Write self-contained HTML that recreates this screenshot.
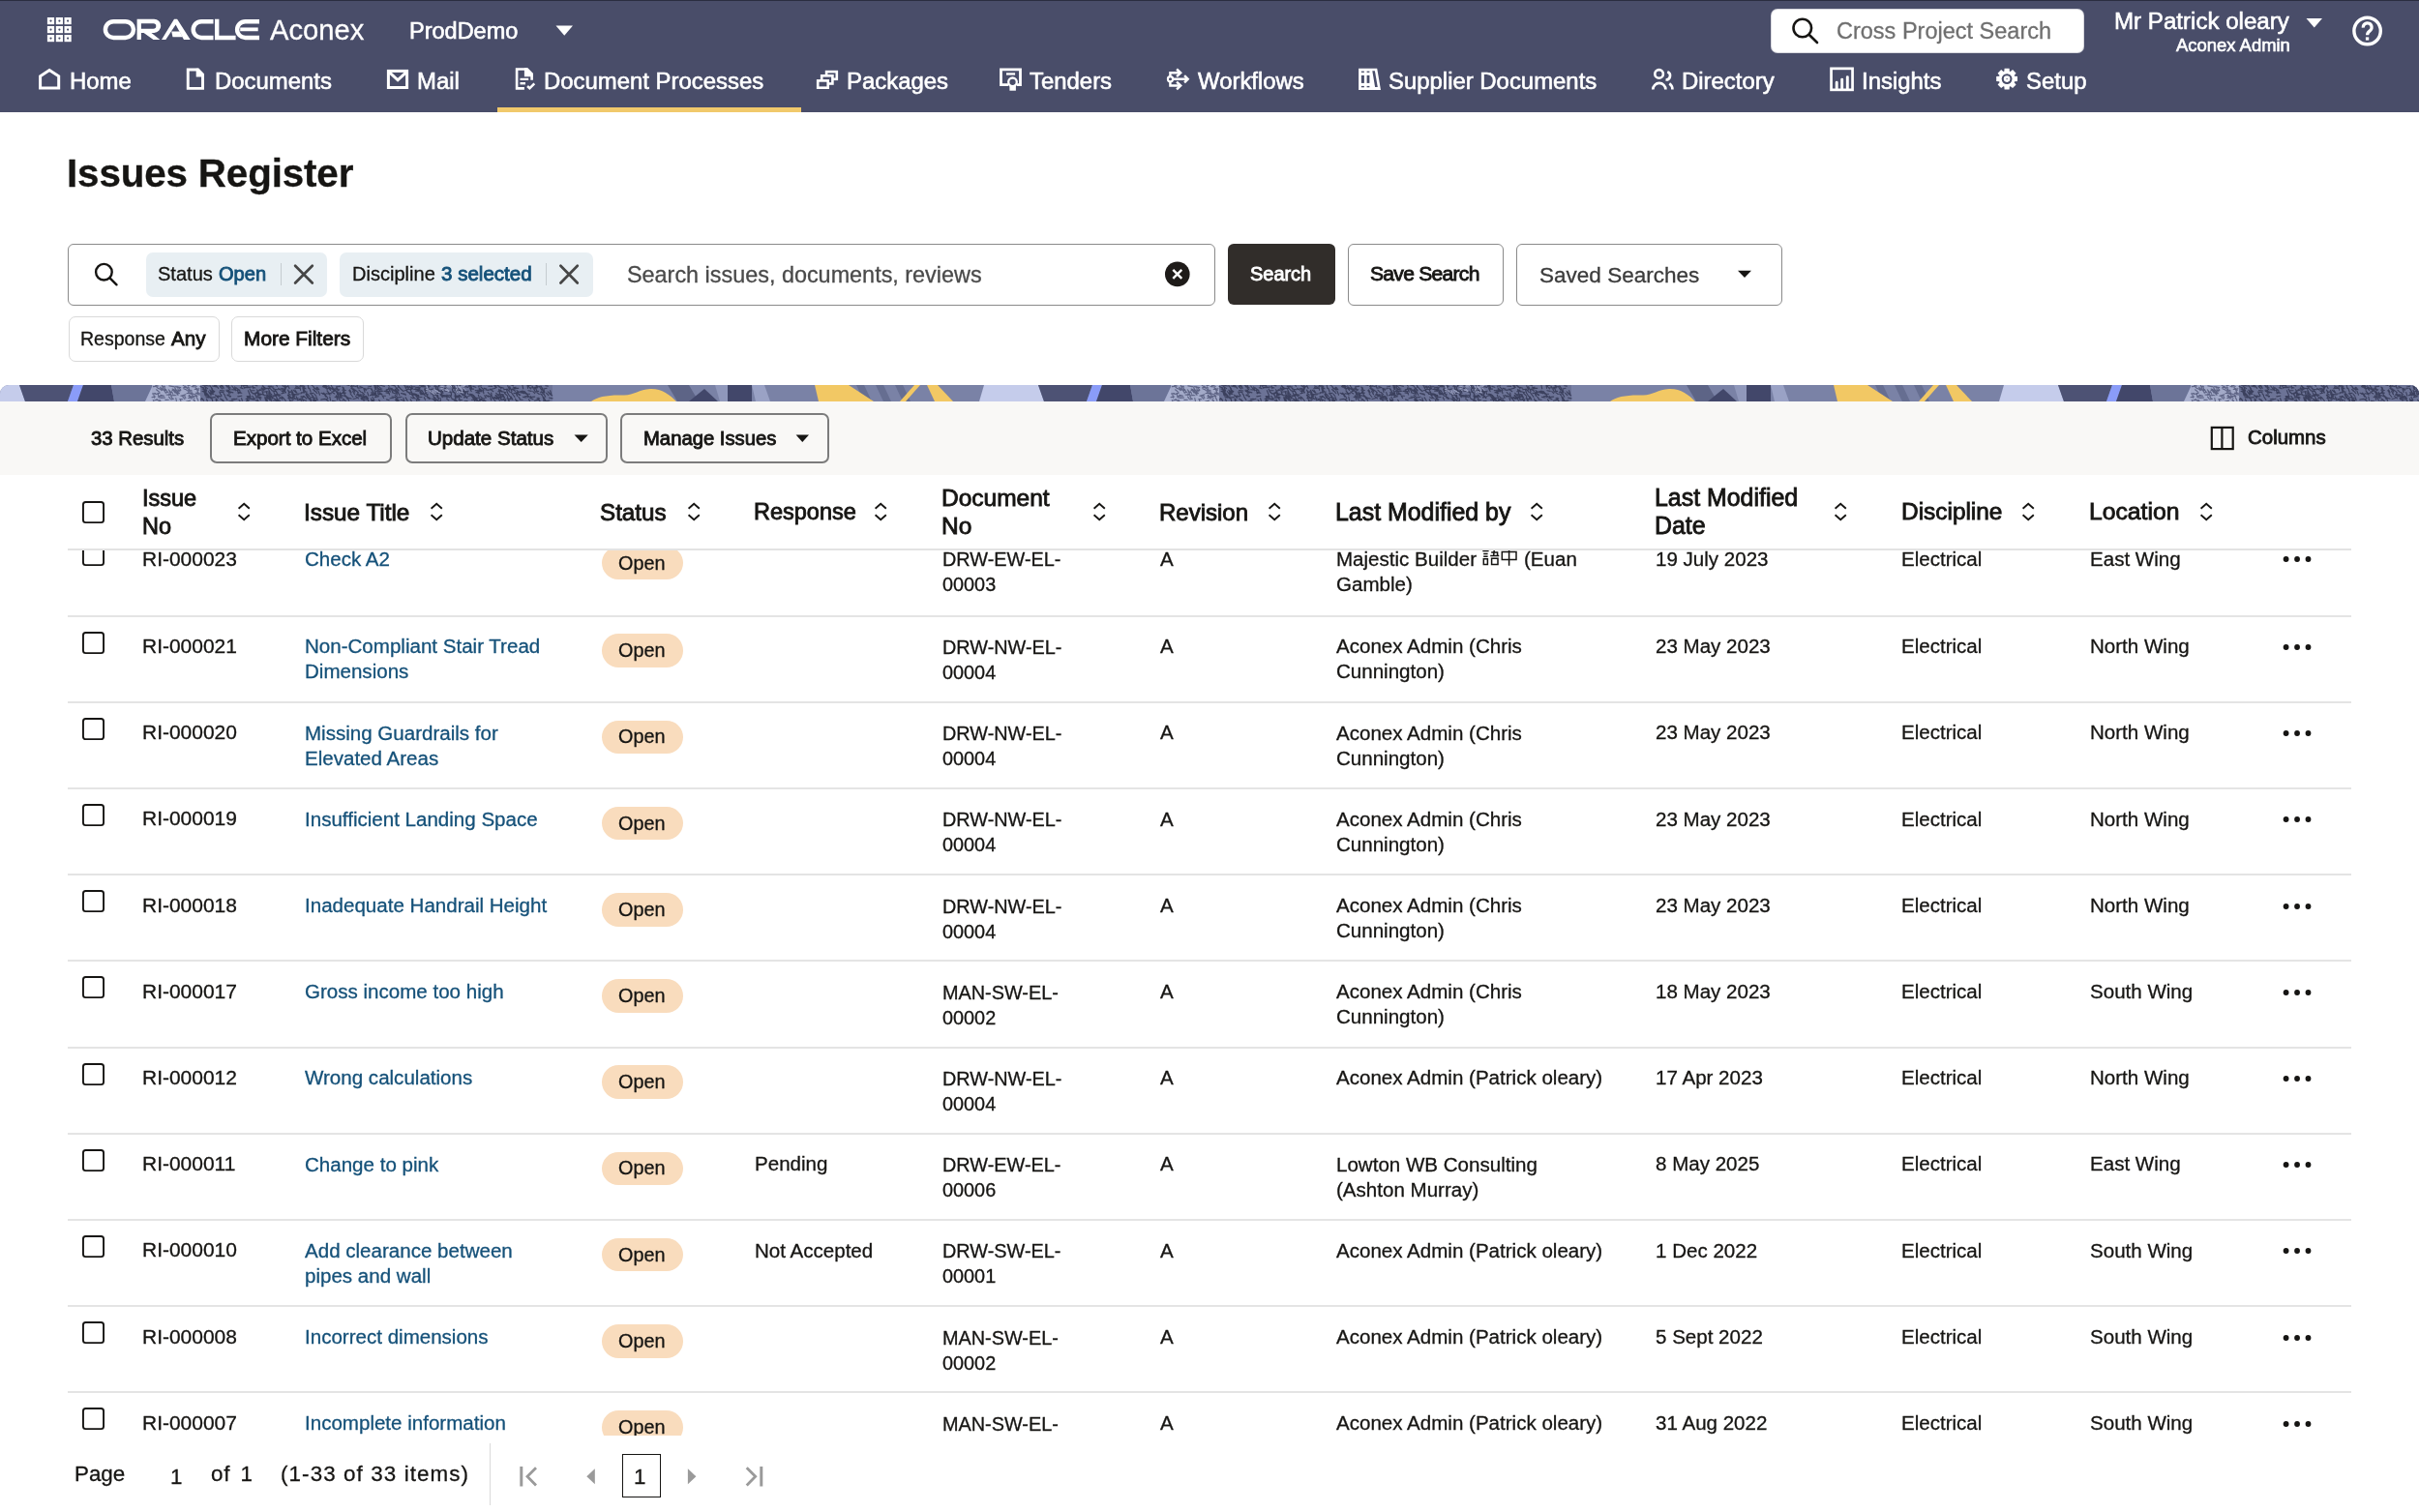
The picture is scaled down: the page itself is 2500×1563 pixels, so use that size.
<!DOCTYPE html><html><head><meta charset="utf-8"><style>
html,body{margin:0;padding:0;width:2500px;height:1563px;overflow:hidden;background:#fff;font-family:"Liberation Sans", sans-serif;}
.t{position:absolute;white-space:nowrap;font-family:"Liberation Sans", sans-serif;will-change:transform;-webkit-text-stroke:0.3px currentColor;}
.sb{-webkit-text-stroke:0.85px currentColor;}
.hb{-webkit-text-stroke:1.3px currentColor;}
.wh{-webkit-text-stroke:0.6px currentColor;}
</style></head><body>
<div style="position:absolute;left:0.00px;top:0.00px;width:2500.00px;height:116.00px;background:#494d69"></div>
<div style="position:absolute;left:0.00px;top:0.00px;width:2500.00px;height:1.20px;background:#2a2d40"></div>
<svg style="position:absolute;left:0px;top:0px;" width="100" height="60" viewBox="0 0 100 60"><rect x="48.9" y="18" width="7.2" height="7.2" fill="#fff"/><circle cx="52.5" cy="21.6" r="1.1" fill="#494d69"/><rect x="57.8" y="18" width="7.2" height="7.2" fill="#fff"/><circle cx="61.4" cy="21.6" r="1.1" fill="#494d69"/><rect x="66.5" y="18" width="7.2" height="7.2" fill="#fff"/><circle cx="70.1" cy="21.6" r="1.1" fill="#494d69"/><rect x="48.9" y="27" width="7.2" height="7.2" fill="#fff"/><circle cx="52.5" cy="30.6" r="1.1" fill="#494d69"/><rect x="57.8" y="27" width="7.2" height="7.2" fill="#fff"/><circle cx="61.4" cy="30.6" r="1.1" fill="#494d69"/><rect x="66.5" y="27" width="7.2" height="7.2" fill="#fff"/><circle cx="70.1" cy="30.6" r="1.1" fill="#494d69"/><rect x="48.9" y="36" width="7.2" height="7.2" fill="#fff"/><circle cx="52.5" cy="39.6" r="1.1" fill="#494d69"/><rect x="57.8" y="36" width="7.2" height="7.2" fill="#fff"/><circle cx="61.4" cy="39.6" r="1.1" fill="#494d69"/><rect x="66.5" y="36" width="7.2" height="7.2" fill="#fff"/><circle cx="70.1" cy="39.6" r="1.1" fill="#494d69"/></svg>
<svg style="position:absolute;left:0px;top:0px;" width="280" height="60" viewBox="0 0 280 60"><g fill="none" stroke="#fff" stroke-width="4.4">
<rect x="108.9" y="22.2" width="29.1" height="16.8" rx="8.4"/>
<path d="M220.5 22.2 H208.1 A8.4 8.4 0 0 0 208.1 39 H220.5"/>
<path d="M224.2 19.8 V39 H243.6"/>
<path d="M268 22.2 H253.5 A8.4 8.4 0 0 0 253.5 39 H268"/>
</g>
<path d="M248.2 30.35 H266.7" stroke="#fff" stroke-width="3.8"/>
<path fill="#fff" fill-rule="evenodd" d="M141.6 19.8 H159.2 A7.05 7.05 0 0 1 159.2 33.9 H156.5 L165.3 41 H158.5 L148.6 33.9 H145.9 V41 H141.6 Z M145.9 24.2 H158.5 A2.8 2.8 0 0 1 158.5 29.8 H145.9 Z"/>
<path fill="#fff" fill-rule="evenodd" d="M167 41 L180 19.8 H183.1 L196.7 41 H190 L181.6 25.5 L171.3 41 Z"/>
<path fill="#fff" d="M177.2 32.4 H185.7 L188.65 38.3 H178.5 Z"/>
</svg>
<div class="t" style="left:279.00px;top:16.60px;font-size:29.17px;line-height:28.8px;font-weight:400;color:#fff;">Aconex</div>
<div class="t wh" style="left:422.80px;top:21.30px;font-size:23.5px;line-height:23.2px;font-weight:400;color:#fff;">ProdDemo</div>
<svg style="position:absolute;left:570px;top:20px;" width="30" height="24" viewBox="0 0 30 24"><path d="M4.5 6.4 H22 L13.25 16.8 Z" fill="#fff"/></svg>
<div style="position:absolute;left:1831.00px;top:10.00px;width:322.00px;height:44.00px;background:#fff;border-radius:6px;box-shadow:0 0 0 1px #d8d8de"></div>
<svg style="position:absolute;left:1840px;top:10px;" width="50" height="44" viewBox="0 0 50 44"><circle cx="22.8" cy="19" r="9.3" fill="none" stroke="#161513" stroke-width="2.6"/><path d="M29.6 25.8 L38 34" stroke="#161513" stroke-width="2.6" stroke-linecap="round"/></svg>
<div class="t" style="left:1897.80px;top:20.90px;font-size:23.5px;line-height:23.2px;font-weight:400;color:#6f6f6f;">Cross Project Search</div>
<div class="t wh" style="right:134.00px;top:9.60px;font-size:24.11px;line-height:23.8px;font-weight:400;color:#fff;">Mr Patrick oleary</div>
<div class="t wh" style="right:133.50px;top:37.80px;font-size:18.44px;line-height:18.2px;font-weight:400;color:#fff;">Aconex Admin</div>
<svg style="position:absolute;left:2380px;top:15px;" width="24" height="18" viewBox="0 0 24 18"><path d="M3.5 4.1 H20 L11.75 13.6 Z" fill="#fff"/></svg>
<svg style="position:absolute;left:2424px;top:12px;" width="46" height="42" viewBox="0 0 46 42"><circle cx="22.6" cy="20" r="13.7" fill="none" stroke="#fff" stroke-width="3.4"/><path d="M18.3 16.6 A4.4 4.4 0 1 1 25.2 19.9 C23.3 21.2 22.6 22 22.6 24.2" fill="none" stroke="#fff" stroke-width="3.2"/><rect x="20.9" y="26.4" width="3.3" height="3.2" fill="#fff"/></svg>
<div class="t wh" style="left:71.60px;top:71.80px;font-size:23.91px;line-height:23.6px;font-weight:400;color:#fff;">Home</div>
<div class="t wh" style="left:222.20px;top:71.80px;font-size:23.91px;line-height:23.6px;font-weight:400;color:#fff;">Documents</div>
<div class="t wh" style="left:430.60px;top:71.80px;font-size:23.91px;line-height:23.6px;font-weight:400;color:#fff;">Mail</div>
<div class="t wh" style="left:561.80px;top:71.80px;font-size:23.91px;line-height:23.6px;font-weight:400;color:#fff;">Document Processes</div>
<div class="t wh" style="left:874.80px;top:71.80px;font-size:23.91px;line-height:23.6px;font-weight:400;color:#fff;">Packages</div>
<div class="t wh" style="left:1064.30px;top:71.80px;font-size:23.91px;line-height:23.6px;font-weight:400;color:#fff;">Tenders</div>
<div class="t wh" style="left:1237.50px;top:71.80px;font-size:23.91px;line-height:23.6px;font-weight:400;color:#fff;">Workflows</div>
<div class="t wh" style="left:1435.40px;top:71.80px;font-size:23.91px;line-height:23.6px;font-weight:400;color:#fff;">Supplier Documents</div>
<div class="t wh" style="left:1738.00px;top:71.80px;font-size:23.91px;line-height:23.6px;font-weight:400;color:#fff;">Directory</div>
<div class="t wh" style="left:1924.40px;top:71.80px;font-size:23.91px;line-height:23.6px;font-weight:400;color:#fff;">Insights</div>
<div class="t wh" style="left:2094.10px;top:71.80px;font-size:23.91px;line-height:23.6px;font-weight:400;color:#fff;">Setup</div>
<svg style="position:absolute;left:34px;top:66px;" width="40" height="32" viewBox="0 0 40 32"><path d="M7.6 25.1 V12.7 L17.1 6.5 L26.7 12.7 V25.1 Z" fill="none" stroke="#fff" stroke-width="3" stroke-linejoin="miter"/></svg>
<svg style="position:absolute;left:186px;top:66px;" width="40" height="32" viewBox="0 0 40 32"><path d="M8.25 25.4 V6.05 H18.6 L23.5 11 V25.4 Z" fill="none" stroke="#fff" stroke-width="2.9"/><path d="M16.7 4.7 H19.3 L25 10.4 V13.5 H16.7 Z" fill="#fff"/></svg>
<svg style="position:absolute;left:394px;top:66px;" width="40" height="32" viewBox="0 0 40 32"><rect x="7.4" y="7.4" width="19.2" height="17.1" fill="none" stroke="#fff" stroke-width="3"/><path d="M8.3 8.6 L17.1 16.8 L25.9 8.6" fill="none" stroke="#fff" stroke-width="3"/></svg>
<svg style="position:absolute;left:525px;top:66px;" width="40" height="32" viewBox="0 0 40 32"><path d="M16.9 25.4 H9.1 V5.5 H19.6 L24.6 10.6 V16.7" fill="none" stroke="#fff" stroke-width="2.6"/><path d="M16.9 4.2 H20.2 L25.9 10 V13.2 H16.9 Z" fill="#fff"/><rect x="12.5" y="14.8" width="8.7" height="2.2" fill="#fff"/><rect x="12.5" y="19" width="5.5" height="2.4" fill="#fff"/><path d="M20.1 23 L22.4 25.3 L27.3 20.3" fill="none" stroke="#fff" stroke-width="2.5"/></svg>
<svg style="position:absolute;left:838px;top:66px;" width="40" height="32" viewBox="0 0 40 32"><rect x="16.1" y="8.1" width="10.7" height="7.7" fill="#494d69" stroke="#fff" stroke-width="2.6"/><rect x="11.2" y="12.3" width="11.2" height="8.2" fill="#494d69" stroke="#fff" stroke-width="2.6"/><rect x="7.2" y="17.4" width="10.5" height="7.3" fill="#494d69" stroke="#fff" stroke-width="2.6"/></svg>
<svg style="position:absolute;left:1026px;top:66px;" width="40" height="32" viewBox="0 0 40 32"><path d="M16 21.6 H8.5 V5.8 H28.5 V21.6 H25" fill="none" stroke="#fff" stroke-width="2.8"/><rect x="14" y="9.3" width="9.1" height="2.3" fill="#fff"/><rect x="17.4" y="22" width="6.5" height="5.7" fill="#fff"/><circle cx="20.5" cy="18.8" r="4.3" fill="#494d69" stroke="#fff" stroke-width="2.3"/></svg>
<svg style="position:absolute;left:1200px;top:66px;" width="40" height="32" viewBox="0 0 40 32"><circle cx="9.5" cy="15.7" r="2.6" fill="none" stroke="#fff" stroke-width="2.1"/><path d="M9.4 13 V9.2 H20 M9.4 18.4 V22.5 H20 M12.2 15.7 H27" fill="none" stroke="#fff" stroke-width="2.4"/><path d="M16.1 5.5 L20.2 9.3 L16.1 13.1 M24.1 12.1 L27.7 15.7 L24.1 19.3 M16.1 18.7 L20.2 22.5 L16.1 26.3" fill="none" stroke="#fff" stroke-width="2.4"/></svg>
<svg style="position:absolute;left:1398px;top:66px;" width="40" height="32" viewBox="0 0 40 32"><path d="M6.1 4.7 H25.2 L29 27.1 H6.1 Z" fill="#fff"/><g fill="#494d69"><rect x="8.9" y="7.6" width="3" height="1.3"/><rect x="8.9" y="11.9" width="3" height="8"/><rect x="8.9" y="22.9" width="3" height="1.4"/><rect x="14.6" y="7.6" width="2.8" height="1.3"/><rect x="14.6" y="11.9" width="2.8" height="8"/><rect x="14.6" y="22.9" width="2.8" height="1.4"/><path d="M20.3 7.2 H22.9 L25.8 24.1 H23.1 Z"/></g></svg>
<svg style="position:absolute;left:1700px;top:66px;" width="40" height="32" viewBox="0 0 40 32"><circle cx="14.6" cy="10.4" r="4.3" fill="none" stroke="#fff" stroke-width="2.6"/><path d="M8.3 26.5 A6.55 6.55 0 0 1 21.4 26.5" fill="none" stroke="#fff" stroke-width="2.7"/><path d="M23.3 8.2 A4.3 4.3 0 0 1 21.5 16.5" fill="none" stroke="#fff" stroke-width="2.6"/><path d="M25.3 20.3 A7 7 0 0 1 28.4 26.5" fill="none" stroke="#fff" stroke-width="2.7"/></svg>
<svg style="position:absolute;left:1884px;top:66px;" width="40" height="32" viewBox="0 0 40 32"><rect x="8.55" y="4.85" width="22" height="22" fill="none" stroke="#fff" stroke-width="2.7"/><path d="M14.2 25.6 V19.3 M19.7 25.6 V16.1 M25.3 25.6 V13.6" fill="none" stroke="#fff" stroke-width="2.9" stroke-linecap="round"/></svg>
<svg style="position:absolute;left:2056px;top:66px;" width="40" height="32" viewBox="0 0 40 32"><g transform="translate(18.1 15.6)"><polygon points="-2.73,-7.94 -2.52,-10.91 2.52,-10.91 2.73,-7.94 3.68,-7.55 5.94,-9.5 9.5,-5.94 7.55,-3.68 7.94,-2.73 10.91,-2.52 10.91,2.52 7.94,2.73 7.55,3.68 9.5,5.94 5.94,9.5 3.68,7.55 2.73,7.94 2.52,10.91 -2.52,10.91 -2.73,7.94 -3.68,7.55 -5.94,9.5 -9.5,5.94 -7.55,3.68 -7.94,2.73 -10.91,2.52 -10.91,-2.52 -7.94,-2.73 -7.55,-3.68 -9.5,-5.94 -5.94,-9.5 -3.68,-7.55" fill="#fff"/><circle r="5.4" fill="#494d69"/><circle r="3.3" fill="#fff"/><circle r="0.7" fill="#494d69"/></g></svg>
<div style="position:absolute;left:514.00px;top:110.50px;width:314.00px;height:5.60px;background:#f1c96b"></div>
<div class="t" style="left:69.30px;top:159.50px;font-size:40.32px;line-height:39.8px;font-weight:700;color:#161513;letter-spacing:-0.12px">Issues Register</div>
<div style="position:absolute;left:70.00px;top:251.60px;width:1186.00px;height:64.20px;box-sizing:border-box;border:1.7px solid #8a8a8a;border-radius:6px;background:#fff"></div>
<svg style="position:absolute;left:90px;top:262px;" width="40" height="40" viewBox="0 0 40 40"><circle cx="17.4" cy="19.2" r="8.3" fill="none" stroke="#161513" stroke-width="2.4"/><path d="M23.5 25.3 L30.5 32.3" stroke="#161513" stroke-width="2.4" stroke-linecap="round"/></svg>
<div style="position:absolute;left:151.20px;top:260.50px;width:187.20px;height:46.50px;background:#e8eff3;border-radius:7px"></div>
<div style="position:absolute;left:351.20px;top:260.50px;width:261.60px;height:46.50px;background:#e8eff3;border-radius:7px"></div>
<div class="t" style="left:163.00px;top:273.90px;font-size:20.06px;line-height:19.8px;font-weight:400;color:#161513;">Status</div>
<div class="t sb" style="left:226.20px;top:273.90px;font-size:20.06px;line-height:19.8px;font-weight:400;color:#155179;">Open</div>
<div style="position:absolute;left:289.50px;top:272.00px;width:1.00px;height:23.00px;background:#c5ccd0"></div>
<svg style="position:absolute;left:298px;top:268px;" width="32" height="32" viewBox="0 0 32 32"><path d="M7.1 6.7 L24.8 24.5 M24.8 6.7 L7.1 24.5" stroke="#464646" stroke-width="2.7" stroke-linecap="round"/></svg>
<div class="t" style="left:363.60px;top:273.90px;font-size:20.06px;line-height:19.8px;font-weight:400;color:#161513;">Discipline</div>
<div class="t sb" style="left:456.00px;top:273.15px;font-size:20.56px;line-height:20.3px;font-weight:400;color:#155179;">3 selected</div>
<div style="position:absolute;left:564.00px;top:272.00px;width:1.00px;height:23.00px;background:#c5ccd0"></div>
<svg style="position:absolute;left:572px;top:268px;" width="32" height="32" viewBox="0 0 32 32"><path d="M7.4 6.7 L24.8 24.5 M24.8 6.7 L7.4 24.5" stroke="#464646" stroke-width="2.7" stroke-linecap="round"/></svg>
<div class="t" style="left:647.80px;top:273.05px;font-size:23.4px;line-height:23.1px;font-weight:400;color:#4a4a4a;">Search issues, documents, reviews</div>
<svg style="position:absolute;left:1200px;top:267px;" width="34" height="34" viewBox="0 0 34 34"><circle cx="16.8" cy="16.4" r="12.8" fill="#1e1b19"/><path d="M12.3 11.9 L21.3 20.9 M21.3 11.9 L12.3 20.9" stroke="#fff" stroke-width="2.4"/></svg>
<div style="position:absolute;left:1269.00px;top:251.80px;width:111.00px;height:63.40px;background:#312d2a;border-radius:6px"></div>
<div class="t sb" style="left:1292.00px;top:274.35px;font-size:19.96px;line-height:19.7px;font-weight:400;color:#fff;">Search</div>
<div style="position:absolute;left:1393.20px;top:251.60px;width:161.20px;height:64.00px;box-sizing:border-box;border:1.7px solid #8a8a8a;border-radius:6px"></div>
<div class="t sb" style="left:1416.30px;top:273.30px;font-size:21.07px;line-height:20.8px;font-weight:400;color:#161513;letter-spacing:-0.72px">Save Search</div>
<div style="position:absolute;left:1567.20px;top:251.60px;width:275.10px;height:64.00px;box-sizing:border-box;border:1.7px solid #8a8a8a;border-radius:6px"></div>
<div class="t" style="left:1590.50px;top:273.57px;font-size:22.54px;line-height:22.25px;font-weight:400;color:#3b3b3b;">Saved Searches</div>
<svg style="position:absolute;left:1790px;top:275px;" width="24" height="16" viewBox="0 0 24 16"><path d="M6 4.7 H20 L13 12 Z" fill="#161513"/></svg>
<div style="position:absolute;left:70.60px;top:327.40px;width:156.00px;height:46.60px;box-sizing:border-box;border:1.8px solid #d9d9d9;border-radius:7px"></div>
<div class="t" style="left:83.10px;top:341.25px;font-size:19.55px;line-height:19.3px;font-weight:400;color:#161513;">Response</div>
<div class="t sb" style="left:176.80px;top:340.25px;font-size:20.56px;line-height:20.3px;font-weight:400;color:#161513;">Any</div>
<div style="position:absolute;left:239.10px;top:327.40px;width:137.00px;height:46.60px;box-sizing:border-box;border:1.8px solid #d9d9d9;border-radius:7px"></div>
<div class="t sb" style="left:251.80px;top:340.10px;font-size:20.87px;line-height:20.6px;font-weight:400;color:#161513;">More Filters</div>
<div style="position:absolute;left:0;top:398px;width:2500px;height:17px;overflow:hidden;border-radius:9px 9px 0 0"><svg width="2500" height="17" viewBox="0 0 2500 17" style="display:block"><defs></defs><g><rect x="-40" y="0" width="1100" height="17" fill="#7a82a6"/><polygon points="-36,0 20,0 26,17 -41,17" fill="#c5cceb"/><polygon points="20,0 76,0 70,17 26,17" fill="#4d5274"/><polygon points="76,0 86,0 80,17 70,17" fill="#8a9cf8"/><polygon points="86,0 115,0 118,17 80,17" fill="#42476a"/><polygon points="115,0 158,0 150,17 118,17" fill="#6c7498"/><polygon points="158,0 160,0 157,17 150,17" fill="#aab1d0"/><rect x="157" y="0" width="50" height="17" fill="#a3aac8"/><path d="M194.5 7.1L196.9 9.2M179.8 1.5L181.5 4.1M171.0 8.0L174.0 7.2M169.7 5.6L171.4 8.3M180.9 3.3L183.1 6.3M202.8 8.6L206.6 8.8M163.2 8.3L163.9 11.9M164.9 15.4L166.5 17.5M176.8 11.6L178.2 14.0M202.7 3.1L205.2 5.3M158.9 10.1L159.6 13.1M201.9 2.3L204.1 5.0M203.7 5.2L205.2 8.8M181.6 7.7L184.0 10.3M181.6 1.6L185.5 2.4M184.2 5.8L186.9 5.1M165.8 10.4L169.6 11.3M204.3 9.7L207.6 10.2M200.7 0.4L203.3 1.4M197.7 5.6L198.5 9.4M181.8 13.5L182.6 17.8M183.1 2.4L186.7 2.6M168.1 4.6L171.7 5.4M168.2 1.6L169.2 5.0M167.2 1.2L170.4 1.6M194.8 1.8L195.7 6.2M191.7 1.0L193.5 3.7M179.1 5.4L181.1 8.1M200.1 11.4L203.9 11.5M174.8 0.9L178.9 1.6M160.9 1.1L163.3 3.4M175.2 6.6L176.5 9.2M195.6 10.7L198.1 12.8M158.4 15.8L159.4 18.1M189.8 2.6L192.3 2.0M199.2 8.9L203.1 10.3M160.7 0.3L163.4 1.0M166.2 2.9L169.4 5.3M197.9 7.9L199.0 11.5M167.4 -0.0L168.2 2.5M196.5 7.9L198.9 10.3M185.3 3.3L186.7 5.5M176.8 11.1L180.2 10.2M194.9 11.4L198.0 14.2M166.2 13.1L170.4 13.1M177.5 6.8L178.6 9.3M201.3 4.4L205.7 4.0M191.9 2.8L195.4 2.8M200.5 14.9L202.4 18.3M194.6 4.8L198.0 5.5M197.9 1.7L202.0 0.6M161.1 9.6L165.2 8.3M163.8 12.6L167.4 13.4M178.1 4.0L181.5 5.4M188.2 11.4L190.9 14.5M171.4 4.5L173.0 7.5M198.9 -1.8L200.0 2.3M179.6 1.8L184.0 2.0M187.7 -1.2L191.0 1.7M159.8 15.8L162.4 15.2M186.9 11.1L191.2 11.0M183.4 1.7L184.2 5.0M157.4 9.0L160.6 8.6M185.8 14.6L188.7 14.8M174.1 9.1L176.8 10.0M158.4 1.6L162.6 1.2M202.3 8.3L205.1 7.9M193.1 5.6L196.4 6.5M193.0 8.5L195.5 8.6M189.8 3.7L192.8 4.9M176.9 14.9L179.5 14.2M162.0 14.7L165.1 17.1M178.0 5.4L182.0 6.2M181.6 6.9L184.3 9.0M198.7 11.5L201.0 13.4M174.3 4.8L176.8 7.5M202.5 11.0L204.1 14.4M195.7 10.6L198.6 12.8M164.0 11.5L168.2 11.2M181.9 5.4L186.0 6.8M183.1 6.6L185.4 8.7M203.6 13.1L204.9 16.2M156.9 12.7L160.6 12.0M174.5 12.1L176.1 14.1M199.9 15.4L202.6 18.2M163.8 3.6L167.8 5.2M202.9 4.4L206.0 3.8M161.6 4.8L164.8 7.4M170.9 15.4L174.3 15.2M190.2 11.0L191.9 13.4M165.7 2.2L166.8 5.7M193.8 0.7L196.3 0.2M187.6 11.0L192.0 9.8M178.9 10.5L182.0 10.8M194.7 13.5L199.0 13.3M169.8 1.0L170.7 5.1M171.9 10.0L175.3 10.5M186.4 14.8L187.2 18.0M192.2 17.3L196.5 16.1" stroke="#5d6384" stroke-width="1.1" stroke-linecap="round"/><rect x="207" y="0" width="364" height="17" fill="#6c7396"/><path d="M430.7 2.4L433.9 3.6M544.5 9.2L547.5 9.3M282.5 11.4L285.2 11.4M448.9 8.2L452.3 8.5M221.4 0.3L224.2 1.3M512.7 10.3L513.3 13.3M553.8 -0.8L555.6 1.7M439.3 6.2L440.9 9.4M452.3 10.4L453.5 14.6M512.1 10.5L514.0 14.2M311.7 11.9L314.4 12.3M290.9 3.5L295.1 4.6M223.0 0.0L225.7 3.3M561.9 12.6L563.8 16.4M384.9 12.6L386.6 15.0M332.0 8.3L335.9 9.4M428.6 9.6L432.8 10.6M445.1 4.6L447.7 4.0M537.0 15.0L540.0 15.3M475.6 7.0L478.7 6.7M369.0 -0.1L369.9 3.1M211.1 1.1L214.6 3.6M279.3 3.7L281.3 5.8M486.4 4.1L489.6 4.1M432.3 12.5L436.0 12.5M424.2 5.0L425.8 8.0M526.0 2.6L529.1 5.0M348.7 9.3L352.7 9.2M469.3 15.9L472.7 16.8M322.9 12.5L325.4 14.8M305.1 5.5L307.0 8.4M338.7 3.4L342.2 3.9M409.4 5.2L411.5 7.6M458.8 6.1L462.0 6.2M216.8 8.3L220.1 9.4M211.2 7.7L212.0 10.7M257.9 9.2L259.1 12.9M492.6 16.2L496.5 16.7M346.1 12.4L349.2 12.7M218.6 3.2L220.4 6.4M271.0 6.2L272.3 10.2M305.6 2.5L308.5 3.5M213.6 14.7L215.0 18.6M357.3 11.1L359.9 13.7M423.2 1.5L425.4 4.0M532.5 14.0L533.6 16.6M452.6 4.4L455.6 7.6M390.8 9.8L394.9 9.4M301.3 5.3L303.0 8.3M348.8 7.1L350.7 9.4M457.7 10.6L460.8 10.8M404.5 4.2L407.1 5.0M271.1 1.1L274.1 3.1M418.0 5.8L420.6 5.3M272.4 1.4L274.1 4.1M429.2 10.5L432.0 14.0M561.5 16.2L565.6 16.6M235.1 10.0L238.0 12.3M367.4 11.4L370.5 13.9M335.3 -1.3L337.9 1.9M299.5 16.3L302.6 15.9M329.2 6.7L330.5 10.2M347.4 1.7L351.7 1.4M351.2 7.4L352.6 11.3M476.1 6.2L479.0 6.5M323.7 4.5L325.5 6.5M286.2 9.3L289.8 10.4M249.9 0.2L253.3 0.0M433.5 0.2L437.8 0.4M536.8 7.1L540.2 6.1M230.9 8.6L232.5 10.7M252.6 2.5L256.5 2.4M341.6 -1.1L343.6 2.9M324.4 15.2L327.4 15.2M334.9 8.3L335.9 10.7M275.2 7.0L276.1 9.9M339.7 0.9L340.8 4.3M384.2 4.2L385.3 7.1M544.7 9.2L545.9 12.3M411.7 1.2L413.7 3.7M354.4 10.8L358.3 12.4M354.0 7.8L356.7 8.5M556.1 13.2L557.7 16.9M427.8 4.4L430.8 4.4M219.2 5.3L220.8 7.5M488.9 1.4L491.8 2.3M383.9 7.6L385.3 10.9M484.5 1.2L487.2 3.2M507.9 4.3L512.2 3.2M399.3 4.9L402.2 4.3M285.9 7.3L287.5 11.1M494.4 1.3L497.6 0.8M433.6 8.0L437.1 8.7M226.7 7.1L230.9 7.4M294.5 -1.0L295.4 3.4M390.7 4.5L394.9 4.0M494.9 2.9L498.0 5.6M461.9 10.7L466.4 10.9M384.9 15.7L388.1 18.2M537.5 7.1L541.1 6.8M334.3 14.7L338.7 14.3M480.0 16.9L483.1 16.5M234.8 10.6L238.5 11.5M514.5 12.6L516.4 16.1M503.8 5.0L506.5 4.9M320.3 8.9L324.0 8.4M344.7 4.2L348.7 3.2M266.0 14.8L267.2 18.2M407.0 6.2L411.0 5.7M461.9 10.1L463.5 12.0M429.8 3.7L432.5 6.3M228.6 0.1L231.2 3.3M368.7 10.2L373.2 9.9M527.5 3.4L528.9 6.6M354.7 6.8L356.6 10.5M383.4 14.1L385.3 17.9M282.0 16.0L285.4 15.8M268.1 4.9L272.1 5.0M488.8 12.1L492.4 14.7M416.8 13.4L417.7 16.1M484.8 9.8L487.7 10.6M234.3 6.3L237.0 6.3M271.6 0.7L273.0 3.4M292.6 13.0L295.3 16.3M278.3 2.1L282.3 1.8M438.6 4.0L440.4 5.8M260.5 14.8L263.6 14.0M435.2 9.6L438.5 9.6M217.0 0.7L219.4 3.9M454.8 7.4L456.7 11.1M337.2 8.7L339.8 9.3M245.8 8.1L249.8 8.2M472.3 0.8L475.9 0.4M451.3 11.2L452.9 13.7M495.1 13.7L498.4 16.0M512.7 8.3L515.0 10.5M449.6 15.2L452.6 15.4M271.3 7.3L275.5 6.7M215.0 10.6L215.9 13.2M243.1 5.2L247.4 5.3M218.2 8.2L221.1 7.5M420.0 4.0L421.2 6.9M517.2 12.2L518.0 15.7M450.6 4.0L453.4 7.3M313.7 11.3L316.8 14.1M500.7 10.9L502.4 13.1M562.1 5.0L562.9 7.8M383.6 16.1L386.9 15.3M282.9 7.1L284.3 10.7M373.0 13.5L376.1 16.1M352.9 8.5L357.2 8.2M512.8 10.5L514.1 13.9M333.4 9.3L336.7 9.9M402.3 4.9L405.7 4.5M409.3 16.0L412.9 16.0M467.1 14.4L471.2 15.5M245.8 11.9L249.8 11.2M306.3 12.1L307.4 14.4M216.8 5.2L219.1 8.1M439.1 8.6L442.3 10.0M313.2 7.3L317.3 7.0M236.1 3.2L238.0 5.0M464.9 10.5L466.9 13.5M455.0 13.3L455.5 15.9M259.9 5.8L262.9 5.7M351.7 8.4L353.2 10.9M472.2 11.4L475.2 10.9M559.8 6.8L561.1 9.3M260.8 11.4L262.4 13.6M535.8 12.2L538.1 15.3M395.3 11.2L398.4 11.3M437.1 8.9L439.8 11.4M527.8 -0.3L530.7 0.9M373.4 14.6L376.8 15.4M390.2 7.1L391.3 10.2M470.1 10.1L471.4 12.5M470.3 12.7L471.1 15.1M265.1 7.4L267.6 10.7M321.1 12.8L323.9 12.6M410.0 2.8L412.0 6.0M368.7 9.9L371.6 10.7M455.0 9.6L456.6 11.8M463.6 6.8L466.6 8.0M349.1 13.0L353.1 13.4M270.1 3.4L273.8 4.8M233.9 5.3L236.6 5.4M284.7 -1.0L286.5 1.3M375.8 3.4L377.1 7.5M461.5 14.1L463.8 15.9M479.2 6.0L481.4 8.9M333.6 1.6L336.9 0.7M290.9 8.9L294.2 8.0M334.1 0.2L336.4 3.2M424.7 12.8L427.2 13.8M304.7 3.8L308.6 3.2M401.6 2.9L405.5 3.7M553.6 7.0L556.6 6.4M456.6 9.9L457.3 12.7M446.7 14.1L450.2 16.7M291.0 11.9L291.9 15.1M533.1 8.6L534.6 11.5M530.4 2.8L533.0 2.2M320.6 13.2L321.8 16.5M534.1 5.7L536.1 7.2M284.1 15.3L287.2 18.5M270.8 2.7L272.3 5.6M259.2 6.8L262.0 9.2M474.5 10.3L476.7 12.3M520.4 11.0L521.7 13.5M470.3 12.8L473.1 12.8M472.7 5.4L475.8 5.5M453.6 6.0L457.1 5.9M255.6 13.9L256.3 16.5M476.8 1.1L480.2 1.9M286.1 13.8L288.5 16.5M553.6 3.5L554.8 5.7M275.6 12.0L278.5 12.2M486.3 0.4L487.8 4.4M431.9 4.6L435.5 7.3M509.9 14.2L512.4 17.4M325.6 15.2L327.8 18.7M298.2 10.1L300.6 12.7M430.7 14.7L433.8 14.9M401.5 3.5L403.3 7.1M227.8 14.2L231.2 16.8M397.1 6.4L400.4 6.1M427.6 8.9L430.3 9.5M376.0 13.4L379.7 12.8M348.6 9.6L349.9 11.7M481.1 1.6L483.9 2.4M207.4 14.9L210.0 14.5M318.2 0.0L318.8 3.5M379.7 14.1L381.3 18.1M291.7 4.0L292.7 8.3M391.4 -0.2L394.1 0.4M399.0 7.9L402.4 8.6M461.2 1.3L461.8 4.3M527.4 11.8L528.1 14.9M293.9 1.3L294.6 4.0M550.8 6.6L552.8 8.6M518.5 6.6L522.8 7.7M300.9 14.0L304.4 14.1M370.9 5.1L373.1 7.3M385.2 7.7L388.6 10.5M422.2 7.7L424.4 9.2M232.5 11.8L234.9 15.4M531.3 3.3L535.7 3.4M388.5 0.9L391.7 1.3M360.0 13.3L363.1 14.1M237.1 6.8L240.9 7.9M535.3 8.4L537.7 10.5M479.4 12.9L483.6 12.0M267.1 8.3L268.9 10.9M307.3 15.6L311.4 14.9M441.0 6.6L444.7 5.9M362.1 9.0L364.9 12.5M538.0 8.0L540.7 7.5M312.5 14.9L316.5 16.2M483.8 -0.9L486.4 1.5M420.3 6.8L423.7 8.1M217.7 6.8L218.3 9.5M385.5 7.3L387.5 10.4M409.4 13.9L411.4 15.5M395.0 10.8L396.6 13.5M515.9 9.2L519.8 10.1M423.6 9.4L427.9 9.0M508.7 13.0L511.4 13.6M442.6 12.4L445.0 14.2M274.1 14.7L276.0 18.0M385.6 8.2L388.2 7.7M274.5 3.6L278.6 3.4M297.4 10.2L299.1 13.6M409.0 13.7L410.3 15.9M541.9 6.4L544.5 9.1M242.7 1.9L243.6 5.8M219.5 1.0L223.6 1.9M268.3 9.0L272.1 9.9M553.8 -0.2L555.7 2.5M524.0 13.8L528.1 14.7M258.1 3.9L259.7 7.3M297.7 0.7L299.0 3.6M552.7 2.4L555.3 3.0M467.5 2.0L470.6 4.4M297.6 5.1L298.6 7.7M496.5 11.9L498.9 13.9M331.8 15.1L335.7 14.3M431.9 12.7L433.0 16.1M312.6 14.3L313.7 18.2M553.7 2.1L558.0 1.5M518.6 14.8L522.7 15.6M539.9 0.0L540.7 3.8M445.2 7.2L446.1 9.6M336.9 14.8L339.7 17.1M354.8 4.8L356.1 8.8M547.8 13.4L551.0 14.7M337.2 2.6L338.3 4.9M233.2 -0.3L236.2 2.4M307.5 2.9L310.4 3.8M312.7 1.5L315.9 3.8M496.9 14.3L501.1 13.7M480.3 7.0L484.1 6.2M210.3 6.7L212.5 9.3M266.5 12.6L270.0 13.1M325.1 5.6L327.8 8.7M213.7 8.4L215.2 11.0M465.8 6.8L466.6 10.2M421.4 1.3L422.2 3.8M285.2 6.8L287.0 9.5M235.3 6.9L238.6 8.0M218.5 8.4L220.9 9.3M210.6 4.4L211.8 8.5M452.2 2.5L453.2 5.2M361.6 4.9L363.1 7.9M494.5 6.8L497.7 6.6M364.7 6.6L366.4 9.8M379.7 7.6L380.9 11.2M312.8 2.9L313.8 6.5M212.5 10.3L216.2 11.0M347.5 2.0L349.7 5.7M429.6 6.1L432.5 6.0M530.2 10.0L531.9 12.3M469.8 5.2L474.1 4.5M439.8 3.5L441.0 6.6M279.7 10.4L281.7 13.6M420.1 2.1L422.8 2.1M521.6 8.5L524.6 11.4M298.5 13.6L300.3 17.2M301.7 9.7L303.8 12.6M470.1 11.7L474.2 10.7M433.8 5.8L435.0 10.0M417.9 0.2L419.7 3.8M310.9 11.9L313.3 12.6M511.3 -1.0L513.2 2.4M305.5 1.0L308.3 2.0M341.1 2.6L344.2 4.8M520.8 14.6L523.1 18.4M319.7 3.3L321.2 7.3M400.7 -1.0L402.2 1.3M470.0 7.9L471.0 11.4M250.9 -0.2L252.9 3.5M281.4 5.9L285.6 6.6M267.8 13.2L269.4 15.1M273.8 13.3L276.6 16.5M370.3 11.9L374.2 11.4M555.0 7.9L557.3 9.5M448.2 12.1L450.7 14.1M551.8 4.2L553.4 7.2M474.4 12.1L475.3 16.3M227.3 1.5L229.7 3.9M549.9 1.2L552.2 4.2M491.9 7.7L494.4 6.9M375.3 12.0L377.9 11.5M480.5 10.5L482.8 13.7M241.9 15.0L245.0 14.3M430.0 10.6L431.8 14.6M209.1 4.0L212.3 5.0M528.3 7.5L530.0 9.8M489.4 12.9L493.9 13.2M261.4 2.3L263.9 3.0M218.7 12.7L219.8 17.0M499.1 5.1L500.0 8.8M567.4 8.5L570.7 11.0M261.6 8.5L264.2 9.3M212.2 2.7L213.6 5.9M526.8 1.6L528.0 4.6M277.9 14.2L281.0 14.3M210.8 4.0L213.1 7.2M406.5 -1.5L408.9 2.2M251.4 0.2L255.6 1.1M554.9 13.8L557.7 13.8M408.6 4.4L410.8 8.2M338.0 6.0L340.5 9.4M500.0 15.2L502.4 17.2M318.0 11.6L319.4 14.9M525.0 8.8L526.6 11.5M321.6 9.7L323.8 12.0M254.1 14.4L257.9 13.7M416.3 9.1L419.5 10.3M448.6 13.0L449.4 16.5M217.1 8.3L218.1 10.9M313.1 3.7L315.3 6.3M389.0 6.5L392.2 6.7M347.4 10.8L350.2 13.7M316.6 8.0L317.3 10.4M450.4 3.8L453.7 6.3M490.0 14.2L492.4 16.2M473.9 15.0L477.6 15.7M369.7 7.8L370.2 10.5M529.3 4.6L533.1 3.6M435.9 5.6L437.7 8.4M287.0 4.7L291.3 3.8M387.5 12.6L391.6 11.8M533.2 7.8L534.6 10.5M403.1 13.8L406.7 13.3M275.3 14.4L279.6 13.4M288.4 14.0L292.6 13.3M447.7 10.1L448.3 13.2M514.8 13.6L518.7 12.6M297.8 13.5L301.5 13.1M223.0 14.0L224.9 15.8M218.9 4.5L219.7 7.4M327.2 2.3L328.0 6.2M552.4 16.2L555.9 15.4M222.8 11.1L226.8 11.3M515.5 4.7L516.5 7.7M387.6 7.8L388.7 10.9M414.1 15.0L417.9 16.5M255.4 15.2L257.0 18.2M398.8 6.1L401.9 6.9M353.6 16.0L356.1 15.5M300.3 6.9L302.8 7.7M515.4 0.8L517.9 3.4M491.3 5.6L495.7 6.0M334.6 2.2L337.6 2.5M558.4 7.3L561.2 7.6M277.8 10.0L280.2 12.6M508.7 13.8L512.8 13.5M375.6 15.0L378.7 14.9M297.7 5.7L299.8 7.7M276.3 10.3L279.1 13.5M546.5 14.7L547.9 17.3M246.1 7.2L248.7 7.9M313.2 1.0L314.4 4.3M343.4 4.2L346.6 5.3M324.8 3.4L328.7 4.5M293.2 5.4L295.5 7.9M390.3 5.0L393.0 4.4M430.4 10.9L432.8 11.6M467.4 4.2L468.1 7.6M239.3 14.9L242.2 14.3M284.4 10.4L287.8 10.9M489.9 12.8L490.7 17.0M516.5 8.1L517.6 11.4M277.3 3.8L279.1 7.8M452.6 4.3L454.9 6.9M324.2 2.5L326.2 4.3M488.6 10.0L489.2 12.5M289.4 13.5L292.3 13.2M559.0 1.1L560.9 4.1M408.4 6.3L410.5 10.2M495.5 15.5L498.0 15.4M389.5 5.0L392.7 6.3M255.1 11.5L259.0 11.6M374.2 7.5L376.7 9.8M524.7 0.8L526.6 4.9M362.5 1.6L365.7 1.0M320.7 15.6L321.6 18.1M302.4 12.2L303.0 15.1M504.0 11.0L506.8 11.8M301.6 8.6L303.7 10.3M266.2 8.6L268.3 10.5M429.5 2.2L432.8 2.3M568.6 5.7L569.8 9.4M514.1 12.4L517.3 11.5M334.2 1.8L338.3 1.4M263.8 8.2L266.6 8.6M489.2 12.5L490.2 15.9M285.2 15.5L289.1 16.0M517.2 12.1L520.3 11.5M243.9 2.8L246.5 4.6M215.6 11.6L218.4 14.0M531.0 8.6L534.4 7.7M380.2 2.0L383.8 1.3M456.0 6.7L457.0 10.3M321.5 -0.5L324.5 2.1M355.0 2.6L356.2 6.0M428.1 9.9L431.0 10.1M209.1 6.4L211.9 7.1M305.4 14.2L308.3 13.8M563.7 0.8L566.3 1.1M506.4 11.8L507.7 15.7M215.5 6.7L217.6 9.8M504.8 1.3L508.7 1.4M386.8 0.3L388.0 4.6M392.2 7.9L394.2 9.8M347.6 7.1L349.7 10.6M266.3 10.6L270.4 9.7M261.3 0.8L261.8 3.6M263.3 9.1L265.0 12.1M277.0 8.8L280.5 9.5M282.7 4.3L287.1 4.7M441.2 10.3L442.0 13.3M528.2 12.1L529.9 15.3M366.8 5.0L370.3 7.6M440.5 0.1L444.3 1.3M217.9 13.3L222.2 12.6M342.7 7.0L345.7 9.0M372.6 10.5L374.8 13.7M451.4 4.2L452.5 6.7M280.1 10.9L284.1 11.0M309.8 1.2L310.6 5.3M470.7 3.8L474.5 2.8M212.7 11.9L216.2 12.5M438.3 12.8L439.5 15.3M362.9 3.3L365.4 5.1M212.8 0.8L216.4 1.0M339.4 8.4L342.6 8.8M287.6 3.4L290.2 5.2M457.4 11.9L461.1 11.7M359.4 12.8L360.6 16.2M542.5 11.8L546.2 11.2M385.8 -1.1L388.4 1.2M209.7 0.3L214.0 0.4M265.8 6.9L268.1 9.1M457.0 2.1L460.5 3.6M479.2 4.7L481.4 7.7M371.9 1.5L374.7 2.5M435.4 1.6L439.7 2.0M323.5 13.4L326.6 13.3M368.5 10.2L371.7 10.6M493.0 7.9L495.8 8.7M525.7 14.0L526.3 16.8M292.1 0.9L296.1 2.2M316.0 9.7L318.0 13.3M461.7 11.8L465.0 12.7M309.6 14.4L312.7 13.8M506.6 4.1L509.8 6.7M410.4 6.4L412.5 9.8M485.9 9.2L488.3 9.8M511.0 12.3L513.0 14.5M230.0 15.0L230.6 17.5M427.2 12.3L429.2 14.2M301.7 7.4L303.5 9.6M485.7 -0.3L486.5 3.6M404.9 12.0L408.9 12.6M291.8 0.8L294.6 1.9M546.0 5.7L549.2 6.4M334.6 8.3L336.7 12.1M350.8 9.6L351.7 12.1M255.0 2.8L257.9 2.2M364.8 6.8L366.6 9.5M303.5 12.1L305.5 14.5M373.7 14.3L377.9 13.3M487.5 15.2L491.0 15.0M327.9 2.4L329.9 4.9M277.7 13.8L279.2 15.9M486.6 -0.2L487.8 3.8M419.1 12.9L421.2 16.3M239.7 1.0L242.1 4.0M557.9 2.2L559.8 5.1M249.3 -0.5L249.8 2.2M411.0 -1.3L411.8 2.5M289.2 13.4L292.6 12.9M377.1 4.5L381.4 3.5M207.1 1.5L210.9 3.1M254.5 16.5L257.6 15.7M544.9 12.8L548.5 11.7M394.8 0.8L397.4 1.4M217.8 6.1L220.4 6.6M213.7 12.9L217.4 12.1M479.4 5.8L480.6 8.8M223.1 15.5L224.2 18.1M291.1 6.5L294.8 6.2M363.9 2.9L365.4 6.0M406.4 5.4L409.1 5.1M454.2 -1.9L455.2 2.0M265.9 11.8L269.6 12.9M311.0 14.5L311.7 18.5M442.5 1.3L443.8 5.0M271.8 9.2L273.8 11.1M513.5 11.8L515.2 14.0M382.5 10.6L386.9 10.0M353.9 5.2L357.3 5.5M281.7 12.6L284.9 15.1M212.1 7.7L215.3 10.2M298.2 8.6L300.3 10.1M399.5 14.9L402.1 15.8M343.9 2.9L345.7 6.2M357.5 11.7L359.1 14.4M419.9 1.0L422.3 3.8M456.7 4.4L457.9 8.6M484.2 11.3L487.6 10.8M358.3 -0.4L360.9 0.5M391.6 15.3L393.1 17.6M275.9 6.7L278.6 7.2M524.5 12.6L525.5 16.2M304.0 9.6L308.1 9.9M512.9 -0.9L516.0 2.1M227.5 5.5L231.8 6.0M478.4 9.3L480.8 11.5M544.8 -0.9L545.6 3.5M534.7 8.4L536.6 10.4M413.8 3.7L416.9 6.5M507.7 8.1L508.4 12.4M457.4 10.7L459.9 11.6M519.6 15.3L522.8 14.9M317.7 9.1L320.0 11.9M541.5 7.7L543.8 9.4M424.7 7.4L427.6 9.8M286.2 9.4L289.1 12.1M459.8 0.1L462.4 0.5M281.7 2.8L284.7 5.3M277.8 11.8L279.3 14.1M387.1 5.6L388.7 8.5M468.0 6.2L470.8 9.3M485.5 0.2L486.8 3.2M234.3 1.6L238.2 3.0M448.6 1.3L452.5 1.8M324.5 15.0L325.7 17.2M387.5 2.1L391.5 3.7M255.3 11.9L257.3 13.5M292.4 3.6L294.7 6.0M562.1 4.0L565.1 3.3M344.2 6.4L348.5 6.0M227.3 8.4L229.0 11.3M219.3 5.0L221.8 6.7M492.5 13.2L493.7 17.0M410.6 14.2L411.8 17.4M256.5 5.7L257.7 8.9M390.0 -1.7L390.8 2.5M222.7 10.3L225.4 13.4M430.6 15.2L431.3 18.7M517.0 4.9L518.8 6.7M266.3 6.1L269.9 5.2M485.6 3.4L487.1 6.6M411.6 7.6L412.9 10.8M431.9 2.5L434.5 2.1M504.2 7.6L506.2 9.6M280.0 15.2L281.1 17.9M538.1 7.6L541.6 8.8M425.4 1.9L428.8 1.8M347.6 11.3L348.6 15.1M277.2 1.4L280.4 1.2M540.5 12.4L543.7 13.0M347.3 4.2L350.7 4.9M284.9 9.7L288.3 9.7M507.2 10.3L509.7 13.6M236.8 17.1L241.0 16.3M452.2 16.9L455.2 16.9M516.7 5.2L518.8 7.1M386.9 8.1L388.2 11.1M495.3 4.7L498.1 7.0M391.8 9.1L394.5 9.2M546.2 1.4L548.5 3.9M424.2 14.9L425.9 17.7M405.4 7.8L408.9 9.0M325.0 9.4L326.8 11.5M513.4 12.8L516.0 15.1M264.2 15.7L267.9 17.2M261.8 -0.7L265.9 0.9M564.7 8.3L566.8 10.7M377.0 3.5L378.3 5.6M479.7 7.4L480.7 10.1M310.8 1.2L314.8 1.5M340.8 12.2L341.6 16.0M378.4 11.3L380.6 13.8M463.4 -0.5L465.5 1.2M556.1 14.9L558.2 16.8M404.1 -0.4L407.2 0.8M363.2 0.3L364.1 3.0M388.0 9.1L390.5 11.6M440.9 11.4L443.5 14.4M414.5 8.6L419.0 9.2M471.8 3.8L472.8 6.5M562.6 13.8L564.4 17.8M471.2 6.0L472.6 8.1M410.7 13.1L415.0 12.2M349.8 12.0L353.7 12.0M327.2 12.8L328.2 15.6M334.5 -0.9L335.4 1.6M436.8 0.8L439.3 1.0M239.7 4.8L244.1 5.2M286.0 14.1L287.7 17.2M378.9 13.7L381.1 16.6M374.1 12.3L378.3 12.7M514.7 6.7L517.5 6.6M247.6 5.2L248.3 8.0M293.2 1.4L297.0 1.5M560.1 4.3L562.5 7.6M255.0 -0.3L256.5 2.6M382.9 3.2L385.5 6.8M286.0 16.6L289.2 16.1M482.7 6.5L483.7 9.5M308.5 9.0L311.4 8.8M566.2 6.9L568.1 8.6M487.0 10.7L489.0 13.8M467.2 0.1L468.2 3.6M311.2 7.8L315.0 7.8M545.5 0.5L548.7 0.3M476.2 8.4L478.7 10.9M425.4 9.6L427.1 11.9M468.5 -0.0L470.4 3.6M370.0 3.1L374.2 2.8M374.7 9.9L377.2 12.8M235.1 -1.6L236.9 2.0M460.1 11.2L462.2 12.9M255.7 12.6L258.6 13.1M217.3 5.7L218.9 7.8M567.6 13.2L571.0 13.9M310.5 0.5L314.7 -0.3M425.0 0.7L426.5 4.0M453.3 -1.0L453.8 1.8M562.1 9.3L563.7 12.2M323.2 15.0L325.3 18.2M549.0 2.7L552.8 3.2M303.1 5.1L305.7 7.7M401.4 7.4L402.6 9.9M470.6 10.7L474.8 12.2M523.3 4.4L524.7 8.5M277.7 7.3L280.7 9.6M245.3 5.3L246.7 8.8M431.6 4.3L435.2 5.2M248.3 2.8L251.1 3.8M409.3 3.3L412.0 5.3M225.0 11.6L228.1 11.9M247.0 15.3L248.8 18.0M302.3 9.7L304.8 11.4M408.2 10.5L410.3 12.1M365.0 0.7L368.4 1.7M260.2 14.1L262.9 15.1M353.9 1.9L355.8 5.4M516.2 10.2L520.2 9.9M391.5 7.1L395.6 6.2M438.8 5.5L441.3 6.4M336.5 10.7L338.7 13.3M559.8 7.5L562.7 8.0M489.2 10.5L491.2 12.6M365.0 14.5L368.9 13.5M285.9 16.2L289.6 16.3M354.5 14.1L357.3 16.7M404.6 4.8L406.2 8.0M502.0 5.0L504.8 5.4M249.6 13.7L250.4 16.2M360.8 5.7L362.4 7.9M450.3 9.0L453.2 8.2M498.4 15.5L500.9 17.7M392.6 2.3L394.1 5.9M208.6 13.7L210.6 16.1M339.2 2.9L341.6 5.4M227.4 1.1L230.0 0.9M548.6 12.6L552.7 12.1M408.6 15.3L411.2 17.5M510.7 0.6L512.3 2.7M500.2 3.4L502.7 4.1M517.6 2.4L520.7 3.2M257.4 2.4L260.9 1.8M502.2 10.5L504.7 12.3M558.7 9.0L560.5 10.9M350.1 14.3L351.9 16.2M236.2 6.1L237.1 9.8M447.5 9.8L451.3 10.8M520.8 4.6L524.1 4.2M273.1 10.7L275.8 10.9M339.3 7.2L341.0 10.3M365.7 3.9L366.8 7.3M497.1 2.2L500.1 5.1M494.3 10.0L495.2 12.8M532.9 15.3L535.7 18.2M387.2 1.2L388.5 4.4M533.7 8.0L537.1 7.3M514.4 10.6L517.4 9.9M433.5 -0.0L436.3 0.9M421.0 4.5L425.3 4.5M564.4 16.8L567.9 16.0M258.3 14.1L261.6 15.0M211.8 9.3L215.1 9.9M494.0 5.2L495.1 8.5M273.7 12.8L276.8 13.0M265.5 4.8L267.1 7.5M317.7 11.7L320.0 14.5M285.2 11.5L286.6 14.3M343.5 16.4L347.0 17.1M524.1 4.1L527.1 7.4M426.0 10.3L430.4 9.8M469.9 11.4L473.5 12.4M383.8 9.1L387.5 10.6M518.9 9.5L520.4 13.0M264.5 13.2L267.1 12.7M529.6 4.2L532.4 6.3M533.8 15.8L536.0 17.6M228.5 -1.3L230.8 2.3M449.9 0.6L450.6 3.5M560.9 11.7L562.0 15.1" stroke="#3b405d" stroke-width="1.15" stroke-linecap="round"/><path d="M464.7 -0.4L466.7 1.9M462.3 4.6L463.6 6.8M476.1 1.8L479.8 1.6M455.7 3.7L458.9 2.8M476.7 3.3L477.7 7.1M473.1 1.9L476.0 2.7M471.2 4.1L472.7 8.1M471.4 1.2L473.1 5.1M461.7 3.8L463.0 6.0M474.3 2.4L476.9 4.4M479.2 3.1L481.1 5.7M440.6 6.3L444.7 5.9M448.7 4.9L452.7 6.4M476.6 -0.0L480.8 0.6M461.9 0.7L465.2 0.7M440.6 -0.4L441.7 2.8M447.2 5.9L448.8 9.9M456.4 4.1L458.4 6.1M460.8 4.9L464.2 6.0M461.4 1.9L465.1 1.9M440.5 4.5L443.1 4.0M451.2 6.5L455.2 8.1M443.7 5.8L446.9 8.3M449.3 6.6L450.6 9.1M473.3 -1.6L474.4 2.1M474.0 6.9L478.1 7.6M460.4 5.2L463.0 5.8M454.8 1.2L458.1 1.5" stroke="#9aa0be" stroke-width="1.0" stroke-linecap="round"/><path d="M611 17 C617 12 629 10 644 10.5 C655 11 660 4.5 672 4 C684 3.6 692 10 699 17 Z" fill="#f2c864"/><polygon points="690,0 712,0 722,17 700,17" fill="#5d6486"/><polygon points="712,17 728,4 742,17" fill="#42476a"/><polygon points="739,0 752,0 756,17 744,17" fill="#9098bb"/><polygon points="752,0 777,0 777,17 752,17" fill="#42476a"/><polygon points="777,0 790,0 796,17 781,17" fill="#9aa2c5"/><polygon points="885,0 893,0 901,17 893,17" fill="#666e91"/><polygon points="905,0 913,0 921,17 913,17" fill="#666e91"/><polygon points="925,0 933,0 941,17 933,17" fill="#666e91"/><polygon points="842,0 877,0 903,17 846,17" fill="#f2c864"/><polygon points="945,0 951,0 936,17 930,17" fill="#f2c864"/><polygon points="958,0 969,0 985,17 966,17" fill="#f2c864"/><polygon points="1023,0 1073,0 1078,17 1015,17" fill="#c5cceb"/></g><g transform="translate(1053 0)"><rect x="-40" y="0" width="1100" height="17" fill="#7a82a6"/><polygon points="-36,0 20,0 26,17 -41,17" fill="#c5cceb"/><polygon points="20,0 76,0 70,17 26,17" fill="#4d5274"/><polygon points="76,0 86,0 80,17 70,17" fill="#8a9cf8"/><polygon points="86,0 115,0 118,17 80,17" fill="#42476a"/><polygon points="115,0 158,0 150,17 118,17" fill="#6c7498"/><polygon points="158,0 160,0 157,17 150,17" fill="#aab1d0"/><rect x="157" y="0" width="50" height="17" fill="#a3aac8"/><path d="M194.5 7.1L196.9 9.2M179.8 1.5L181.5 4.1M171.0 8.0L174.0 7.2M169.7 5.6L171.4 8.3M180.9 3.3L183.1 6.3M202.8 8.6L206.6 8.8M163.2 8.3L163.9 11.9M164.9 15.4L166.5 17.5M176.8 11.6L178.2 14.0M202.7 3.1L205.2 5.3M158.9 10.1L159.6 13.1M201.9 2.3L204.1 5.0M203.7 5.2L205.2 8.8M181.6 7.7L184.0 10.3M181.6 1.6L185.5 2.4M184.2 5.8L186.9 5.1M165.8 10.4L169.6 11.3M204.3 9.7L207.6 10.2M200.7 0.4L203.3 1.4M197.7 5.6L198.5 9.4M181.8 13.5L182.6 17.8M183.1 2.4L186.7 2.6M168.1 4.6L171.7 5.4M168.2 1.6L169.2 5.0M167.2 1.2L170.4 1.6M194.8 1.8L195.7 6.2M191.7 1.0L193.5 3.7M179.1 5.4L181.1 8.1M200.1 11.4L203.9 11.5M174.8 0.9L178.9 1.6M160.9 1.1L163.3 3.4M175.2 6.6L176.5 9.2M195.6 10.7L198.1 12.8M158.4 15.8L159.4 18.1M189.8 2.6L192.3 2.0M199.2 8.9L203.1 10.3M160.7 0.3L163.4 1.0M166.2 2.9L169.4 5.3M197.9 7.9L199.0 11.5M167.4 -0.0L168.2 2.5M196.5 7.9L198.9 10.3M185.3 3.3L186.7 5.5M176.8 11.1L180.2 10.2M194.9 11.4L198.0 14.2M166.2 13.1L170.4 13.1M177.5 6.8L178.6 9.3M201.3 4.4L205.7 4.0M191.9 2.8L195.4 2.8M200.5 14.9L202.4 18.3M194.6 4.8L198.0 5.5M197.9 1.7L202.0 0.6M161.1 9.6L165.2 8.3M163.8 12.6L167.4 13.4M178.1 4.0L181.5 5.4M188.2 11.4L190.9 14.5M171.4 4.5L173.0 7.5M198.9 -1.8L200.0 2.3M179.6 1.8L184.0 2.0M187.7 -1.2L191.0 1.7M159.8 15.8L162.4 15.2M186.9 11.1L191.2 11.0M183.4 1.7L184.2 5.0M157.4 9.0L160.6 8.6M185.8 14.6L188.7 14.8M174.1 9.1L176.8 10.0M158.4 1.6L162.6 1.2M202.3 8.3L205.1 7.9M193.1 5.6L196.4 6.5M193.0 8.5L195.5 8.6M189.8 3.7L192.8 4.9M176.9 14.9L179.5 14.2M162.0 14.7L165.1 17.1M178.0 5.4L182.0 6.2M181.6 6.9L184.3 9.0M198.7 11.5L201.0 13.4M174.3 4.8L176.8 7.5M202.5 11.0L204.1 14.4M195.7 10.6L198.6 12.8M164.0 11.5L168.2 11.2M181.9 5.4L186.0 6.8M183.1 6.6L185.4 8.7M203.6 13.1L204.9 16.2M156.9 12.7L160.6 12.0M174.5 12.1L176.1 14.1M199.9 15.4L202.6 18.2M163.8 3.6L167.8 5.2M202.9 4.4L206.0 3.8M161.6 4.8L164.8 7.4M170.9 15.4L174.3 15.2M190.2 11.0L191.9 13.4M165.7 2.2L166.8 5.7M193.8 0.7L196.3 0.2M187.6 11.0L192.0 9.8M178.9 10.5L182.0 10.8M194.7 13.5L199.0 13.3M169.8 1.0L170.7 5.1M171.9 10.0L175.3 10.5M186.4 14.8L187.2 18.0M192.2 17.3L196.5 16.1" stroke="#5d6384" stroke-width="1.1" stroke-linecap="round"/><rect x="207" y="0" width="364" height="17" fill="#6c7396"/><path d="M430.7 2.4L433.9 3.6M544.5 9.2L547.5 9.3M282.5 11.4L285.2 11.4M448.9 8.2L452.3 8.5M221.4 0.3L224.2 1.3M512.7 10.3L513.3 13.3M553.8 -0.8L555.6 1.7M439.3 6.2L440.9 9.4M452.3 10.4L453.5 14.6M512.1 10.5L514.0 14.2M311.7 11.9L314.4 12.3M290.9 3.5L295.1 4.6M223.0 0.0L225.7 3.3M561.9 12.6L563.8 16.4M384.9 12.6L386.6 15.0M332.0 8.3L335.9 9.4M428.6 9.6L432.8 10.6M445.1 4.6L447.7 4.0M537.0 15.0L540.0 15.3M475.6 7.0L478.7 6.7M369.0 -0.1L369.9 3.1M211.1 1.1L214.6 3.6M279.3 3.7L281.3 5.8M486.4 4.1L489.6 4.1M432.3 12.5L436.0 12.5M424.2 5.0L425.8 8.0M526.0 2.6L529.1 5.0M348.7 9.3L352.7 9.2M469.3 15.9L472.7 16.8M322.9 12.5L325.4 14.8M305.1 5.5L307.0 8.4M338.7 3.4L342.2 3.9M409.4 5.2L411.5 7.6M458.8 6.1L462.0 6.2M216.8 8.3L220.1 9.4M211.2 7.7L212.0 10.7M257.9 9.2L259.1 12.9M492.6 16.2L496.5 16.7M346.1 12.4L349.2 12.7M218.6 3.2L220.4 6.4M271.0 6.2L272.3 10.2M305.6 2.5L308.5 3.5M213.6 14.7L215.0 18.6M357.3 11.1L359.9 13.7M423.2 1.5L425.4 4.0M532.5 14.0L533.6 16.6M452.6 4.4L455.6 7.6M390.8 9.8L394.9 9.4M301.3 5.3L303.0 8.3M348.8 7.1L350.7 9.4M457.7 10.6L460.8 10.8M404.5 4.2L407.1 5.0M271.1 1.1L274.1 3.1M418.0 5.8L420.6 5.3M272.4 1.4L274.1 4.1M429.2 10.5L432.0 14.0M561.5 16.2L565.6 16.6M235.1 10.0L238.0 12.3M367.4 11.4L370.5 13.9M335.3 -1.3L337.9 1.9M299.5 16.3L302.6 15.9M329.2 6.7L330.5 10.2M347.4 1.7L351.7 1.4M351.2 7.4L352.6 11.3M476.1 6.2L479.0 6.5M323.7 4.5L325.5 6.5M286.2 9.3L289.8 10.4M249.9 0.2L253.3 0.0M433.5 0.2L437.8 0.4M536.8 7.1L540.2 6.1M230.9 8.6L232.5 10.7M252.6 2.5L256.5 2.4M341.6 -1.1L343.6 2.9M324.4 15.2L327.4 15.2M334.9 8.3L335.9 10.7M275.2 7.0L276.1 9.9M339.7 0.9L340.8 4.3M384.2 4.2L385.3 7.1M544.7 9.2L545.9 12.3M411.7 1.2L413.7 3.7M354.4 10.8L358.3 12.4M354.0 7.8L356.7 8.5M556.1 13.2L557.7 16.9M427.8 4.4L430.8 4.4M219.2 5.3L220.8 7.5M488.9 1.4L491.8 2.3M383.9 7.6L385.3 10.9M484.5 1.2L487.2 3.2M507.9 4.3L512.2 3.2M399.3 4.9L402.2 4.3M285.9 7.3L287.5 11.1M494.4 1.3L497.6 0.8M433.6 8.0L437.1 8.7M226.7 7.1L230.9 7.4M294.5 -1.0L295.4 3.4M390.7 4.5L394.9 4.0M494.9 2.9L498.0 5.6M461.9 10.7L466.4 10.9M384.9 15.7L388.1 18.2M537.5 7.1L541.1 6.8M334.3 14.7L338.7 14.3M480.0 16.9L483.1 16.5M234.8 10.6L238.5 11.5M514.5 12.6L516.4 16.1M503.8 5.0L506.5 4.9M320.3 8.9L324.0 8.4M344.7 4.2L348.7 3.2M266.0 14.8L267.2 18.2M407.0 6.2L411.0 5.7M461.9 10.1L463.5 12.0M429.8 3.7L432.5 6.3M228.6 0.1L231.2 3.3M368.7 10.2L373.2 9.9M527.5 3.4L528.9 6.6M354.7 6.8L356.6 10.5M383.4 14.1L385.3 17.9M282.0 16.0L285.4 15.8M268.1 4.9L272.1 5.0M488.8 12.1L492.4 14.7M416.8 13.4L417.7 16.1M484.8 9.8L487.7 10.6M234.3 6.3L237.0 6.3M271.6 0.7L273.0 3.4M292.6 13.0L295.3 16.3M278.3 2.1L282.3 1.8M438.6 4.0L440.4 5.8M260.5 14.8L263.6 14.0M435.2 9.6L438.5 9.6M217.0 0.7L219.4 3.9M454.8 7.4L456.7 11.1M337.2 8.7L339.8 9.3M245.8 8.1L249.8 8.2M472.3 0.8L475.9 0.4M451.3 11.2L452.9 13.7M495.1 13.7L498.4 16.0M512.7 8.3L515.0 10.5M449.6 15.2L452.6 15.4M271.3 7.3L275.5 6.7M215.0 10.6L215.9 13.2M243.1 5.2L247.4 5.3M218.2 8.2L221.1 7.5M420.0 4.0L421.2 6.9M517.2 12.2L518.0 15.7M450.6 4.0L453.4 7.3M313.7 11.3L316.8 14.1M500.7 10.9L502.4 13.1M562.1 5.0L562.9 7.8M383.6 16.1L386.9 15.3M282.9 7.1L284.3 10.7M373.0 13.5L376.1 16.1M352.9 8.5L357.2 8.2M512.8 10.5L514.1 13.9M333.4 9.3L336.7 9.9M402.3 4.9L405.7 4.5M409.3 16.0L412.9 16.0M467.1 14.4L471.2 15.5M245.8 11.9L249.8 11.2M306.3 12.1L307.4 14.4M216.8 5.2L219.1 8.1M439.1 8.6L442.3 10.0M313.2 7.3L317.3 7.0M236.1 3.2L238.0 5.0M464.9 10.5L466.9 13.5M455.0 13.3L455.5 15.9M259.9 5.8L262.9 5.7M351.7 8.4L353.2 10.9M472.2 11.4L475.2 10.9M559.8 6.8L561.1 9.3M260.8 11.4L262.4 13.6M535.8 12.2L538.1 15.3M395.3 11.2L398.4 11.3M437.1 8.9L439.8 11.4M527.8 -0.3L530.7 0.9M373.4 14.6L376.8 15.4M390.2 7.1L391.3 10.2M470.1 10.1L471.4 12.5M470.3 12.7L471.1 15.1M265.1 7.4L267.6 10.7M321.1 12.8L323.9 12.6M410.0 2.8L412.0 6.0M368.7 9.9L371.6 10.7M455.0 9.6L456.6 11.8M463.6 6.8L466.6 8.0M349.1 13.0L353.1 13.4M270.1 3.4L273.8 4.8M233.9 5.3L236.6 5.4M284.7 -1.0L286.5 1.3M375.8 3.4L377.1 7.5M461.5 14.1L463.8 15.9M479.2 6.0L481.4 8.9M333.6 1.6L336.9 0.7M290.9 8.9L294.2 8.0M334.1 0.2L336.4 3.2M424.7 12.8L427.2 13.8M304.7 3.8L308.6 3.2M401.6 2.9L405.5 3.7M553.6 7.0L556.6 6.4M456.6 9.9L457.3 12.7M446.7 14.1L450.2 16.7M291.0 11.9L291.9 15.1M533.1 8.6L534.6 11.5M530.4 2.8L533.0 2.2M320.6 13.2L321.8 16.5M534.1 5.7L536.1 7.2M284.1 15.3L287.2 18.5M270.8 2.7L272.3 5.6M259.2 6.8L262.0 9.2M474.5 10.3L476.7 12.3M520.4 11.0L521.7 13.5M470.3 12.8L473.1 12.8M472.7 5.4L475.8 5.5M453.6 6.0L457.1 5.9M255.6 13.9L256.3 16.5M476.8 1.1L480.2 1.9M286.1 13.8L288.5 16.5M553.6 3.5L554.8 5.7M275.6 12.0L278.5 12.2M486.3 0.4L487.8 4.4M431.9 4.6L435.5 7.3M509.9 14.2L512.4 17.4M325.6 15.2L327.8 18.7M298.2 10.1L300.6 12.7M430.7 14.7L433.8 14.9M401.5 3.5L403.3 7.1M227.8 14.2L231.2 16.8M397.1 6.4L400.4 6.1M427.6 8.9L430.3 9.5M376.0 13.4L379.7 12.8M348.6 9.6L349.9 11.7M481.1 1.6L483.9 2.4M207.4 14.9L210.0 14.5M318.2 0.0L318.8 3.5M379.7 14.1L381.3 18.1M291.7 4.0L292.7 8.3M391.4 -0.2L394.1 0.4M399.0 7.9L402.4 8.6M461.2 1.3L461.8 4.3M527.4 11.8L528.1 14.9M293.9 1.3L294.6 4.0M550.8 6.6L552.8 8.6M518.5 6.6L522.8 7.7M300.9 14.0L304.4 14.1M370.9 5.1L373.1 7.3M385.2 7.7L388.6 10.5M422.2 7.7L424.4 9.2M232.5 11.8L234.9 15.4M531.3 3.3L535.7 3.4M388.5 0.9L391.7 1.3M360.0 13.3L363.1 14.1M237.1 6.8L240.9 7.9M535.3 8.4L537.7 10.5M479.4 12.9L483.6 12.0M267.1 8.3L268.9 10.9M307.3 15.6L311.4 14.9M441.0 6.6L444.7 5.9M362.1 9.0L364.9 12.5M538.0 8.0L540.7 7.5M312.5 14.9L316.5 16.2M483.8 -0.9L486.4 1.5M420.3 6.8L423.7 8.1M217.7 6.8L218.3 9.5M385.5 7.3L387.5 10.4M409.4 13.9L411.4 15.5M395.0 10.8L396.6 13.5M515.9 9.2L519.8 10.1M423.6 9.4L427.9 9.0M508.7 13.0L511.4 13.6M442.6 12.4L445.0 14.2M274.1 14.7L276.0 18.0M385.6 8.2L388.2 7.7M274.5 3.6L278.6 3.4M297.4 10.2L299.1 13.6M409.0 13.7L410.3 15.9M541.9 6.4L544.5 9.1M242.7 1.9L243.6 5.8M219.5 1.0L223.6 1.9M268.3 9.0L272.1 9.9M553.8 -0.2L555.7 2.5M524.0 13.8L528.1 14.7M258.1 3.9L259.7 7.3M297.7 0.7L299.0 3.6M552.7 2.4L555.3 3.0M467.5 2.0L470.6 4.4M297.6 5.1L298.6 7.7M496.5 11.9L498.9 13.9M331.8 15.1L335.7 14.3M431.9 12.7L433.0 16.1M312.6 14.3L313.7 18.2M553.7 2.1L558.0 1.5M518.6 14.8L522.7 15.6M539.9 0.0L540.7 3.8M445.2 7.2L446.1 9.6M336.9 14.8L339.7 17.1M354.8 4.8L356.1 8.8M547.8 13.4L551.0 14.7M337.2 2.6L338.3 4.9M233.2 -0.3L236.2 2.4M307.5 2.9L310.4 3.8M312.7 1.5L315.9 3.8M496.9 14.3L501.1 13.7M480.3 7.0L484.1 6.2M210.3 6.7L212.5 9.3M266.5 12.6L270.0 13.1M325.1 5.6L327.8 8.7M213.7 8.4L215.2 11.0M465.8 6.8L466.6 10.2M421.4 1.3L422.2 3.8M285.2 6.8L287.0 9.5M235.3 6.9L238.6 8.0M218.5 8.4L220.9 9.3M210.6 4.4L211.8 8.5M452.2 2.5L453.2 5.2M361.6 4.9L363.1 7.9M494.5 6.8L497.7 6.6M364.7 6.6L366.4 9.8M379.7 7.6L380.9 11.2M312.8 2.9L313.8 6.5M212.5 10.3L216.2 11.0M347.5 2.0L349.7 5.7M429.6 6.1L432.5 6.0M530.2 10.0L531.9 12.3M469.8 5.2L474.1 4.5M439.8 3.5L441.0 6.6M279.7 10.4L281.7 13.6M420.1 2.1L422.8 2.1M521.6 8.5L524.6 11.4M298.5 13.6L300.3 17.2M301.7 9.7L303.8 12.6M470.1 11.7L474.2 10.7M433.8 5.8L435.0 10.0M417.9 0.2L419.7 3.8M310.9 11.9L313.3 12.6M511.3 -1.0L513.2 2.4M305.5 1.0L308.3 2.0M341.1 2.6L344.2 4.8M520.8 14.6L523.1 18.4M319.7 3.3L321.2 7.3M400.7 -1.0L402.2 1.3M470.0 7.9L471.0 11.4M250.9 -0.2L252.9 3.5M281.4 5.9L285.6 6.6M267.8 13.2L269.4 15.1M273.8 13.3L276.6 16.5M370.3 11.9L374.2 11.4M555.0 7.9L557.3 9.5M448.2 12.1L450.7 14.1M551.8 4.2L553.4 7.2M474.4 12.1L475.3 16.3M227.3 1.5L229.7 3.9M549.9 1.2L552.2 4.2M491.9 7.7L494.4 6.9M375.3 12.0L377.9 11.5M480.5 10.5L482.8 13.7M241.9 15.0L245.0 14.3M430.0 10.6L431.8 14.6M209.1 4.0L212.3 5.0M528.3 7.5L530.0 9.8M489.4 12.9L493.9 13.2M261.4 2.3L263.9 3.0M218.7 12.7L219.8 17.0M499.1 5.1L500.0 8.8M567.4 8.5L570.7 11.0M261.6 8.5L264.2 9.3M212.2 2.7L213.6 5.9M526.8 1.6L528.0 4.6M277.9 14.2L281.0 14.3M210.8 4.0L213.1 7.2M406.5 -1.5L408.9 2.2M251.4 0.2L255.6 1.1M554.9 13.8L557.7 13.8M408.6 4.4L410.8 8.2M338.0 6.0L340.5 9.4M500.0 15.2L502.4 17.2M318.0 11.6L319.4 14.9M525.0 8.8L526.6 11.5M321.6 9.7L323.8 12.0M254.1 14.4L257.9 13.7M416.3 9.1L419.5 10.3M448.6 13.0L449.4 16.5M217.1 8.3L218.1 10.9M313.1 3.7L315.3 6.3M389.0 6.5L392.2 6.7M347.4 10.8L350.2 13.7M316.6 8.0L317.3 10.4M450.4 3.8L453.7 6.3M490.0 14.2L492.4 16.2M473.9 15.0L477.6 15.7M369.7 7.8L370.2 10.5M529.3 4.6L533.1 3.6M435.9 5.6L437.7 8.4M287.0 4.7L291.3 3.8M387.5 12.6L391.6 11.8M533.2 7.8L534.6 10.5M403.1 13.8L406.7 13.3M275.3 14.4L279.6 13.4M288.4 14.0L292.6 13.3M447.7 10.1L448.3 13.2M514.8 13.6L518.7 12.6M297.8 13.5L301.5 13.1M223.0 14.0L224.9 15.8M218.9 4.5L219.7 7.4M327.2 2.3L328.0 6.2M552.4 16.2L555.9 15.4M222.8 11.1L226.8 11.3M515.5 4.7L516.5 7.7M387.6 7.8L388.7 10.9M414.1 15.0L417.9 16.5M255.4 15.2L257.0 18.2M398.8 6.1L401.9 6.9M353.6 16.0L356.1 15.5M300.3 6.9L302.8 7.7M515.4 0.8L517.9 3.4M491.3 5.6L495.7 6.0M334.6 2.2L337.6 2.5M558.4 7.3L561.2 7.6M277.8 10.0L280.2 12.6M508.7 13.8L512.8 13.5M375.6 15.0L378.7 14.9M297.7 5.7L299.8 7.7M276.3 10.3L279.1 13.5M546.5 14.7L547.9 17.3M246.1 7.2L248.7 7.9M313.2 1.0L314.4 4.3M343.4 4.2L346.6 5.3M324.8 3.4L328.7 4.5M293.2 5.4L295.5 7.9M390.3 5.0L393.0 4.4M430.4 10.9L432.8 11.6M467.4 4.2L468.1 7.6M239.3 14.9L242.2 14.3M284.4 10.4L287.8 10.9M489.9 12.8L490.7 17.0M516.5 8.1L517.6 11.4M277.3 3.8L279.1 7.8M452.6 4.3L454.9 6.9M324.2 2.5L326.2 4.3M488.6 10.0L489.2 12.5M289.4 13.5L292.3 13.2M559.0 1.1L560.9 4.1M408.4 6.3L410.5 10.2M495.5 15.5L498.0 15.4M389.5 5.0L392.7 6.3M255.1 11.5L259.0 11.6M374.2 7.5L376.7 9.8M524.7 0.8L526.6 4.9M362.5 1.6L365.7 1.0M320.7 15.6L321.6 18.1M302.4 12.2L303.0 15.1M504.0 11.0L506.8 11.8M301.6 8.6L303.7 10.3M266.2 8.6L268.3 10.5M429.5 2.2L432.8 2.3M568.6 5.7L569.8 9.4M514.1 12.4L517.3 11.5M334.2 1.8L338.3 1.4M263.8 8.2L266.6 8.6M489.2 12.5L490.2 15.9M285.2 15.5L289.1 16.0M517.2 12.1L520.3 11.5M243.9 2.8L246.5 4.6M215.6 11.6L218.4 14.0M531.0 8.6L534.4 7.7M380.2 2.0L383.8 1.3M456.0 6.7L457.0 10.3M321.5 -0.5L324.5 2.1M355.0 2.6L356.2 6.0M428.1 9.9L431.0 10.1M209.1 6.4L211.9 7.1M305.4 14.2L308.3 13.8M563.7 0.8L566.3 1.1M506.4 11.8L507.7 15.7M215.5 6.7L217.6 9.8M504.8 1.3L508.7 1.4M386.8 0.3L388.0 4.6M392.2 7.9L394.2 9.8M347.6 7.1L349.7 10.6M266.3 10.6L270.4 9.7M261.3 0.8L261.8 3.6M263.3 9.1L265.0 12.1M277.0 8.8L280.5 9.5M282.7 4.3L287.1 4.7M441.2 10.3L442.0 13.3M528.2 12.1L529.9 15.3M366.8 5.0L370.3 7.6M440.5 0.1L444.3 1.3M217.9 13.3L222.2 12.6M342.7 7.0L345.7 9.0M372.6 10.5L374.8 13.7M451.4 4.2L452.5 6.7M280.1 10.9L284.1 11.0M309.8 1.2L310.6 5.3M470.7 3.8L474.5 2.8M212.7 11.9L216.2 12.5M438.3 12.8L439.5 15.3M362.9 3.3L365.4 5.1M212.8 0.8L216.4 1.0M339.4 8.4L342.6 8.8M287.6 3.4L290.2 5.2M457.4 11.9L461.1 11.7M359.4 12.8L360.6 16.2M542.5 11.8L546.2 11.2M385.8 -1.1L388.4 1.2M209.7 0.3L214.0 0.4M265.8 6.9L268.1 9.1M457.0 2.1L460.5 3.6M479.2 4.7L481.4 7.7M371.9 1.5L374.7 2.5M435.4 1.6L439.7 2.0M323.5 13.4L326.6 13.3M368.5 10.2L371.7 10.6M493.0 7.9L495.8 8.7M525.7 14.0L526.3 16.8M292.1 0.9L296.1 2.2M316.0 9.7L318.0 13.3M461.7 11.8L465.0 12.7M309.6 14.4L312.7 13.8M506.6 4.1L509.8 6.7M410.4 6.4L412.5 9.8M485.9 9.2L488.3 9.8M511.0 12.3L513.0 14.5M230.0 15.0L230.6 17.5M427.2 12.3L429.2 14.2M301.7 7.4L303.5 9.6M485.7 -0.3L486.5 3.6M404.9 12.0L408.9 12.6M291.8 0.8L294.6 1.9M546.0 5.7L549.2 6.4M334.6 8.3L336.7 12.1M350.8 9.6L351.7 12.1M255.0 2.8L257.9 2.2M364.8 6.8L366.6 9.5M303.5 12.1L305.5 14.5M373.7 14.3L377.9 13.3M487.5 15.2L491.0 15.0M327.9 2.4L329.9 4.9M277.7 13.8L279.2 15.9M486.6 -0.2L487.8 3.8M419.1 12.9L421.2 16.3M239.7 1.0L242.1 4.0M557.9 2.2L559.8 5.1M249.3 -0.5L249.8 2.2M411.0 -1.3L411.8 2.5M289.2 13.4L292.6 12.9M377.1 4.5L381.4 3.5M207.1 1.5L210.9 3.1M254.5 16.5L257.6 15.7M544.9 12.8L548.5 11.7M394.8 0.8L397.4 1.4M217.8 6.1L220.4 6.6M213.7 12.9L217.4 12.1M479.4 5.8L480.6 8.8M223.1 15.5L224.2 18.1M291.1 6.5L294.8 6.2M363.9 2.9L365.4 6.0M406.4 5.4L409.1 5.1M454.2 -1.9L455.2 2.0M265.9 11.8L269.6 12.9M311.0 14.5L311.7 18.5M442.5 1.3L443.8 5.0M271.8 9.2L273.8 11.1M513.5 11.8L515.2 14.0M382.5 10.6L386.9 10.0M353.9 5.2L357.3 5.5M281.7 12.6L284.9 15.1M212.1 7.7L215.3 10.2M298.2 8.6L300.3 10.1M399.5 14.9L402.1 15.8M343.9 2.9L345.7 6.2M357.5 11.7L359.1 14.4M419.9 1.0L422.3 3.8M456.7 4.4L457.9 8.6M484.2 11.3L487.6 10.8M358.3 -0.4L360.9 0.5M391.6 15.3L393.1 17.6M275.9 6.7L278.6 7.2M524.5 12.6L525.5 16.2M304.0 9.6L308.1 9.9M512.9 -0.9L516.0 2.1M227.5 5.5L231.8 6.0M478.4 9.3L480.8 11.5M544.8 -0.9L545.6 3.5M534.7 8.4L536.6 10.4M413.8 3.7L416.9 6.5M507.7 8.1L508.4 12.4M457.4 10.7L459.9 11.6M519.6 15.3L522.8 14.9M317.7 9.1L320.0 11.9M541.5 7.7L543.8 9.4M424.7 7.4L427.6 9.8M286.2 9.4L289.1 12.1M459.8 0.1L462.4 0.5M281.7 2.8L284.7 5.3M277.8 11.8L279.3 14.1M387.1 5.6L388.7 8.5M468.0 6.2L470.8 9.3M485.5 0.2L486.8 3.2M234.3 1.6L238.2 3.0M448.6 1.3L452.5 1.8M324.5 15.0L325.7 17.2M387.5 2.1L391.5 3.7M255.3 11.9L257.3 13.5M292.4 3.6L294.7 6.0M562.1 4.0L565.1 3.3M344.2 6.4L348.5 6.0M227.3 8.4L229.0 11.3M219.3 5.0L221.8 6.7M492.5 13.2L493.7 17.0M410.6 14.2L411.8 17.4M256.5 5.7L257.7 8.9M390.0 -1.7L390.8 2.5M222.7 10.3L225.4 13.4M430.6 15.2L431.3 18.7M517.0 4.9L518.8 6.7M266.3 6.1L269.9 5.2M485.6 3.4L487.1 6.6M411.6 7.6L412.9 10.8M431.9 2.5L434.5 2.1M504.2 7.6L506.2 9.6M280.0 15.2L281.1 17.9M538.1 7.6L541.6 8.8M425.4 1.9L428.8 1.8M347.6 11.3L348.6 15.1M277.2 1.4L280.4 1.2M540.5 12.4L543.7 13.0M347.3 4.2L350.7 4.9M284.9 9.7L288.3 9.7M507.2 10.3L509.7 13.6M236.8 17.1L241.0 16.3M452.2 16.9L455.2 16.9M516.7 5.2L518.8 7.1M386.9 8.1L388.2 11.1M495.3 4.7L498.1 7.0M391.8 9.1L394.5 9.2M546.2 1.4L548.5 3.9M424.2 14.9L425.9 17.7M405.4 7.8L408.9 9.0M325.0 9.4L326.8 11.5M513.4 12.8L516.0 15.1M264.2 15.7L267.9 17.2M261.8 -0.7L265.9 0.9M564.7 8.3L566.8 10.7M377.0 3.5L378.3 5.6M479.7 7.4L480.7 10.1M310.8 1.2L314.8 1.5M340.8 12.2L341.6 16.0M378.4 11.3L380.6 13.8M463.4 -0.5L465.5 1.2M556.1 14.9L558.2 16.8M404.1 -0.4L407.2 0.8M363.2 0.3L364.1 3.0M388.0 9.1L390.5 11.6M440.9 11.4L443.5 14.4M414.5 8.6L419.0 9.2M471.8 3.8L472.8 6.5M562.6 13.8L564.4 17.8M471.2 6.0L472.6 8.1M410.7 13.1L415.0 12.2M349.8 12.0L353.7 12.0M327.2 12.8L328.2 15.6M334.5 -0.9L335.4 1.6M436.8 0.8L439.3 1.0M239.7 4.8L244.1 5.2M286.0 14.1L287.7 17.2M378.9 13.7L381.1 16.6M374.1 12.3L378.3 12.7M514.7 6.7L517.5 6.6M247.6 5.2L248.3 8.0M293.2 1.4L297.0 1.5M560.1 4.3L562.5 7.6M255.0 -0.3L256.5 2.6M382.9 3.2L385.5 6.8M286.0 16.6L289.2 16.1M482.7 6.5L483.7 9.5M308.5 9.0L311.4 8.8M566.2 6.9L568.1 8.6M487.0 10.7L489.0 13.8M467.2 0.1L468.2 3.6M311.2 7.8L315.0 7.8M545.5 0.5L548.7 0.3M476.2 8.4L478.7 10.9M425.4 9.6L427.1 11.9M468.5 -0.0L470.4 3.6M370.0 3.1L374.2 2.8M374.7 9.9L377.2 12.8M235.1 -1.6L236.9 2.0M460.1 11.2L462.2 12.9M255.7 12.6L258.6 13.1M217.3 5.7L218.9 7.8M567.6 13.2L571.0 13.9M310.5 0.5L314.7 -0.3M425.0 0.7L426.5 4.0M453.3 -1.0L453.8 1.8M562.1 9.3L563.7 12.2M323.2 15.0L325.3 18.2M549.0 2.7L552.8 3.2M303.1 5.1L305.7 7.7M401.4 7.4L402.6 9.9M470.6 10.7L474.8 12.2M523.3 4.4L524.7 8.5M277.7 7.3L280.7 9.6M245.3 5.3L246.7 8.8M431.6 4.3L435.2 5.2M248.3 2.8L251.1 3.8M409.3 3.3L412.0 5.3M225.0 11.6L228.1 11.9M247.0 15.3L248.8 18.0M302.3 9.7L304.8 11.4M408.2 10.5L410.3 12.1M365.0 0.7L368.4 1.7M260.2 14.1L262.9 15.1M353.9 1.9L355.8 5.4M516.2 10.2L520.2 9.9M391.5 7.1L395.6 6.2M438.8 5.5L441.3 6.4M336.5 10.7L338.7 13.3M559.8 7.5L562.7 8.0M489.2 10.5L491.2 12.6M365.0 14.5L368.9 13.5M285.9 16.2L289.6 16.3M354.5 14.1L357.3 16.7M404.6 4.8L406.2 8.0M502.0 5.0L504.8 5.4M249.6 13.7L250.4 16.2M360.8 5.7L362.4 7.9M450.3 9.0L453.2 8.2M498.4 15.5L500.9 17.7M392.6 2.3L394.1 5.9M208.6 13.7L210.6 16.1M339.2 2.9L341.6 5.4M227.4 1.1L230.0 0.9M548.6 12.6L552.7 12.1M408.6 15.3L411.2 17.5M510.7 0.6L512.3 2.7M500.2 3.4L502.7 4.1M517.6 2.4L520.7 3.2M257.4 2.4L260.9 1.8M502.2 10.5L504.7 12.3M558.7 9.0L560.5 10.9M350.1 14.3L351.9 16.2M236.2 6.1L237.1 9.8M447.5 9.8L451.3 10.8M520.8 4.6L524.1 4.2M273.1 10.7L275.8 10.9M339.3 7.2L341.0 10.3M365.7 3.9L366.8 7.3M497.1 2.2L500.1 5.1M494.3 10.0L495.2 12.8M532.9 15.3L535.7 18.2M387.2 1.2L388.5 4.4M533.7 8.0L537.1 7.3M514.4 10.6L517.4 9.9M433.5 -0.0L436.3 0.9M421.0 4.5L425.3 4.5M564.4 16.8L567.9 16.0M258.3 14.1L261.6 15.0M211.8 9.3L215.1 9.9M494.0 5.2L495.1 8.5M273.7 12.8L276.8 13.0M265.5 4.8L267.1 7.5M317.7 11.7L320.0 14.5M285.2 11.5L286.6 14.3M343.5 16.4L347.0 17.1M524.1 4.1L527.1 7.4M426.0 10.3L430.4 9.8M469.9 11.4L473.5 12.4M383.8 9.1L387.5 10.6M518.9 9.5L520.4 13.0M264.5 13.2L267.1 12.7M529.6 4.2L532.4 6.3M533.8 15.8L536.0 17.6M228.5 -1.3L230.8 2.3M449.9 0.6L450.6 3.5M560.9 11.7L562.0 15.1" stroke="#3b405d" stroke-width="1.15" stroke-linecap="round"/><path d="M464.7 -0.4L466.7 1.9M462.3 4.6L463.6 6.8M476.1 1.8L479.8 1.6M455.7 3.7L458.9 2.8M476.7 3.3L477.7 7.1M473.1 1.9L476.0 2.7M471.2 4.1L472.7 8.1M471.4 1.2L473.1 5.1M461.7 3.8L463.0 6.0M474.3 2.4L476.9 4.4M479.2 3.1L481.1 5.7M440.6 6.3L444.7 5.9M448.7 4.9L452.7 6.4M476.6 -0.0L480.8 0.6M461.9 0.7L465.2 0.7M440.6 -0.4L441.7 2.8M447.2 5.9L448.8 9.9M456.4 4.1L458.4 6.1M460.8 4.9L464.2 6.0M461.4 1.9L465.1 1.9M440.5 4.5L443.1 4.0M451.2 6.5L455.2 8.1M443.7 5.8L446.9 8.3M449.3 6.6L450.6 9.1M473.3 -1.6L474.4 2.1M474.0 6.9L478.1 7.6M460.4 5.2L463.0 5.8M454.8 1.2L458.1 1.5" stroke="#9aa0be" stroke-width="1.0" stroke-linecap="round"/><path d="M611 17 C617 12 629 10 644 10.5 C655 11 660 4.5 672 4 C684 3.6 692 10 699 17 Z" fill="#f2c864"/><polygon points="690,0 712,0 722,17 700,17" fill="#5d6486"/><polygon points="712,17 728,4 742,17" fill="#42476a"/><polygon points="739,0 752,0 756,17 744,17" fill="#9098bb"/><polygon points="752,0 777,0 777,17 752,17" fill="#42476a"/><polygon points="777,0 790,0 796,17 781,17" fill="#9aa2c5"/><polygon points="885,0 893,0 901,17 893,17" fill="#666e91"/><polygon points="905,0 913,0 921,17 913,17" fill="#666e91"/><polygon points="925,0 933,0 941,17 933,17" fill="#666e91"/><polygon points="842,0 877,0 903,17 846,17" fill="#f2c864"/><polygon points="945,0 951,0 936,17 930,17" fill="#f2c864"/><polygon points="958,0 969,0 985,17 966,17" fill="#f2c864"/><polygon points="1023,0 1073,0 1078,17 1015,17" fill="#c5cceb"/></g><g transform="translate(2107 0)"><rect x="-40" y="0" width="1100" height="17" fill="#7a82a6"/><polygon points="-36,0 20,0 26,17 -41,17" fill="#c5cceb"/><polygon points="20,0 76,0 70,17 26,17" fill="#4d5274"/><polygon points="76,0 86,0 80,17 70,17" fill="#8a9cf8"/><polygon points="86,0 115,0 118,17 80,17" fill="#42476a"/><polygon points="115,0 158,0 150,17 118,17" fill="#6c7498"/><polygon points="158,0 160,0 157,17 150,17" fill="#aab1d0"/><rect x="157" y="0" width="50" height="17" fill="#a3aac8"/><path d="M194.5 7.1L196.9 9.2M179.8 1.5L181.5 4.1M171.0 8.0L174.0 7.2M169.7 5.6L171.4 8.3M180.9 3.3L183.1 6.3M202.8 8.6L206.6 8.8M163.2 8.3L163.9 11.9M164.9 15.4L166.5 17.5M176.8 11.6L178.2 14.0M202.7 3.1L205.2 5.3M158.9 10.1L159.6 13.1M201.9 2.3L204.1 5.0M203.7 5.2L205.2 8.8M181.6 7.7L184.0 10.3M181.6 1.6L185.5 2.4M184.2 5.8L186.9 5.1M165.8 10.4L169.6 11.3M204.3 9.7L207.6 10.2M200.7 0.4L203.3 1.4M197.7 5.6L198.5 9.4M181.8 13.5L182.6 17.8M183.1 2.4L186.7 2.6M168.1 4.6L171.7 5.4M168.2 1.6L169.2 5.0M167.2 1.2L170.4 1.6M194.8 1.8L195.7 6.2M191.7 1.0L193.5 3.7M179.1 5.4L181.1 8.1M200.1 11.4L203.9 11.5M174.8 0.9L178.9 1.6M160.9 1.1L163.3 3.4M175.2 6.6L176.5 9.2M195.6 10.7L198.1 12.8M158.4 15.8L159.4 18.1M189.8 2.6L192.3 2.0M199.2 8.9L203.1 10.3M160.7 0.3L163.4 1.0M166.2 2.9L169.4 5.3M197.9 7.9L199.0 11.5M167.4 -0.0L168.2 2.5M196.5 7.9L198.9 10.3M185.3 3.3L186.7 5.5M176.8 11.1L180.2 10.2M194.9 11.4L198.0 14.2M166.2 13.1L170.4 13.1M177.5 6.8L178.6 9.3M201.3 4.4L205.7 4.0M191.9 2.8L195.4 2.8M200.5 14.9L202.4 18.3M194.6 4.8L198.0 5.5M197.9 1.7L202.0 0.6M161.1 9.6L165.2 8.3M163.8 12.6L167.4 13.4M178.1 4.0L181.5 5.4M188.2 11.4L190.9 14.5M171.4 4.5L173.0 7.5M198.9 -1.8L200.0 2.3M179.6 1.8L184.0 2.0M187.7 -1.2L191.0 1.7M159.8 15.8L162.4 15.2M186.9 11.1L191.2 11.0M183.4 1.7L184.2 5.0M157.4 9.0L160.6 8.6M185.8 14.6L188.7 14.8M174.1 9.1L176.8 10.0M158.4 1.6L162.6 1.2M202.3 8.3L205.1 7.9M193.1 5.6L196.4 6.5M193.0 8.5L195.5 8.6M189.8 3.7L192.8 4.9M176.9 14.9L179.5 14.2M162.0 14.7L165.1 17.1M178.0 5.4L182.0 6.2M181.6 6.9L184.3 9.0M198.7 11.5L201.0 13.4M174.3 4.8L176.8 7.5M202.5 11.0L204.1 14.4M195.7 10.6L198.6 12.8M164.0 11.5L168.2 11.2M181.9 5.4L186.0 6.8M183.1 6.6L185.4 8.7M203.6 13.1L204.9 16.2M156.9 12.7L160.6 12.0M174.5 12.1L176.1 14.1M199.9 15.4L202.6 18.2M163.8 3.6L167.8 5.2M202.9 4.4L206.0 3.8M161.6 4.8L164.8 7.4M170.9 15.4L174.3 15.2M190.2 11.0L191.9 13.4M165.7 2.2L166.8 5.7M193.8 0.7L196.3 0.2M187.6 11.0L192.0 9.8M178.9 10.5L182.0 10.8M194.7 13.5L199.0 13.3M169.8 1.0L170.7 5.1M171.9 10.0L175.3 10.5M186.4 14.8L187.2 18.0M192.2 17.3L196.5 16.1" stroke="#5d6384" stroke-width="1.1" stroke-linecap="round"/><rect x="207" y="0" width="364" height="17" fill="#6c7396"/><path d="M430.7 2.4L433.9 3.6M544.5 9.2L547.5 9.3M282.5 11.4L285.2 11.4M448.9 8.2L452.3 8.5M221.4 0.3L224.2 1.3M512.7 10.3L513.3 13.3M553.8 -0.8L555.6 1.7M439.3 6.2L440.9 9.4M452.3 10.4L453.5 14.6M512.1 10.5L514.0 14.2M311.7 11.9L314.4 12.3M290.9 3.5L295.1 4.6M223.0 0.0L225.7 3.3M561.9 12.6L563.8 16.4M384.9 12.6L386.6 15.0M332.0 8.3L335.9 9.4M428.6 9.6L432.8 10.6M445.1 4.6L447.7 4.0M537.0 15.0L540.0 15.3M475.6 7.0L478.7 6.7M369.0 -0.1L369.9 3.1M211.1 1.1L214.6 3.6M279.3 3.7L281.3 5.8M486.4 4.1L489.6 4.1M432.3 12.5L436.0 12.5M424.2 5.0L425.8 8.0M526.0 2.6L529.1 5.0M348.7 9.3L352.7 9.2M469.3 15.9L472.7 16.8M322.9 12.5L325.4 14.8M305.1 5.5L307.0 8.4M338.7 3.4L342.2 3.9M409.4 5.2L411.5 7.6M458.8 6.1L462.0 6.2M216.8 8.3L220.1 9.4M211.2 7.7L212.0 10.7M257.9 9.2L259.1 12.9M492.6 16.2L496.5 16.7M346.1 12.4L349.2 12.7M218.6 3.2L220.4 6.4M271.0 6.2L272.3 10.2M305.6 2.5L308.5 3.5M213.6 14.7L215.0 18.6M357.3 11.1L359.9 13.7M423.2 1.5L425.4 4.0M532.5 14.0L533.6 16.6M452.6 4.4L455.6 7.6M390.8 9.8L394.9 9.4M301.3 5.3L303.0 8.3M348.8 7.1L350.7 9.4M457.7 10.6L460.8 10.8M404.5 4.2L407.1 5.0M271.1 1.1L274.1 3.1M418.0 5.8L420.6 5.3M272.4 1.4L274.1 4.1M429.2 10.5L432.0 14.0M561.5 16.2L565.6 16.6M235.1 10.0L238.0 12.3M367.4 11.4L370.5 13.9M335.3 -1.3L337.9 1.9M299.5 16.3L302.6 15.9M329.2 6.7L330.5 10.2M347.4 1.7L351.7 1.4M351.2 7.4L352.6 11.3M476.1 6.2L479.0 6.5M323.7 4.5L325.5 6.5M286.2 9.3L289.8 10.4M249.9 0.2L253.3 0.0M433.5 0.2L437.8 0.4M536.8 7.1L540.2 6.1M230.9 8.6L232.5 10.7M252.6 2.5L256.5 2.4M341.6 -1.1L343.6 2.9M324.4 15.2L327.4 15.2M334.9 8.3L335.9 10.7M275.2 7.0L276.1 9.9M339.7 0.9L340.8 4.3M384.2 4.2L385.3 7.1M544.7 9.2L545.9 12.3M411.7 1.2L413.7 3.7M354.4 10.8L358.3 12.4M354.0 7.8L356.7 8.5M556.1 13.2L557.7 16.9M427.8 4.4L430.8 4.4M219.2 5.3L220.8 7.5M488.9 1.4L491.8 2.3M383.9 7.6L385.3 10.9M484.5 1.2L487.2 3.2M507.9 4.3L512.2 3.2M399.3 4.9L402.2 4.3M285.9 7.3L287.5 11.1M494.4 1.3L497.6 0.8M433.6 8.0L437.1 8.7M226.7 7.1L230.9 7.4M294.5 -1.0L295.4 3.4M390.7 4.5L394.9 4.0M494.9 2.9L498.0 5.6M461.9 10.7L466.4 10.9M384.9 15.7L388.1 18.2M537.5 7.1L541.1 6.8M334.3 14.7L338.7 14.3M480.0 16.9L483.1 16.5M234.8 10.6L238.5 11.5M514.5 12.6L516.4 16.1M503.8 5.0L506.5 4.9M320.3 8.9L324.0 8.4M344.7 4.2L348.7 3.2M266.0 14.8L267.2 18.2M407.0 6.2L411.0 5.7M461.9 10.1L463.5 12.0M429.8 3.7L432.5 6.3M228.6 0.1L231.2 3.3M368.7 10.2L373.2 9.9M527.5 3.4L528.9 6.6M354.7 6.8L356.6 10.5M383.4 14.1L385.3 17.9M282.0 16.0L285.4 15.8M268.1 4.9L272.1 5.0M488.8 12.1L492.4 14.7M416.8 13.4L417.7 16.1M484.8 9.8L487.7 10.6M234.3 6.3L237.0 6.3M271.6 0.7L273.0 3.4M292.6 13.0L295.3 16.3M278.3 2.1L282.3 1.8M438.6 4.0L440.4 5.8M260.5 14.8L263.6 14.0M435.2 9.6L438.5 9.6M217.0 0.7L219.4 3.9M454.8 7.4L456.7 11.1M337.2 8.7L339.8 9.3M245.8 8.1L249.8 8.2M472.3 0.8L475.9 0.4M451.3 11.2L452.9 13.7M495.1 13.7L498.4 16.0M512.7 8.3L515.0 10.5M449.6 15.2L452.6 15.4M271.3 7.3L275.5 6.7M215.0 10.6L215.9 13.2M243.1 5.2L247.4 5.3M218.2 8.2L221.1 7.5M420.0 4.0L421.2 6.9M517.2 12.2L518.0 15.7M450.6 4.0L453.4 7.3M313.7 11.3L316.8 14.1M500.7 10.9L502.4 13.1M562.1 5.0L562.9 7.8M383.6 16.1L386.9 15.3M282.9 7.1L284.3 10.7M373.0 13.5L376.1 16.1M352.9 8.5L357.2 8.2M512.8 10.5L514.1 13.9M333.4 9.3L336.7 9.9M402.3 4.9L405.7 4.5M409.3 16.0L412.9 16.0M467.1 14.4L471.2 15.5M245.8 11.9L249.8 11.2M306.3 12.1L307.4 14.4M216.8 5.2L219.1 8.1M439.1 8.6L442.3 10.0M313.2 7.3L317.3 7.0M236.1 3.2L238.0 5.0M464.9 10.5L466.9 13.5M455.0 13.3L455.5 15.9M259.9 5.8L262.9 5.7M351.7 8.4L353.2 10.9M472.2 11.4L475.2 10.9M559.8 6.8L561.1 9.3M260.8 11.4L262.4 13.6M535.8 12.2L538.1 15.3M395.3 11.2L398.4 11.3M437.1 8.9L439.8 11.4M527.8 -0.3L530.7 0.9M373.4 14.6L376.8 15.4M390.2 7.1L391.3 10.2M470.1 10.1L471.4 12.5M470.3 12.7L471.1 15.1M265.1 7.4L267.6 10.7M321.1 12.8L323.9 12.6M410.0 2.8L412.0 6.0M368.7 9.9L371.6 10.7M455.0 9.6L456.6 11.8M463.6 6.8L466.6 8.0M349.1 13.0L353.1 13.4M270.1 3.4L273.8 4.8M233.9 5.3L236.6 5.4M284.7 -1.0L286.5 1.3M375.8 3.4L377.1 7.5M461.5 14.1L463.8 15.9M479.2 6.0L481.4 8.9M333.6 1.6L336.9 0.7M290.9 8.9L294.2 8.0M334.1 0.2L336.4 3.2M424.7 12.8L427.2 13.8M304.7 3.8L308.6 3.2M401.6 2.9L405.5 3.7M553.6 7.0L556.6 6.4M456.6 9.9L457.3 12.7M446.7 14.1L450.2 16.7M291.0 11.9L291.9 15.1M533.1 8.6L534.6 11.5M530.4 2.8L533.0 2.2M320.6 13.2L321.8 16.5M534.1 5.7L536.1 7.2M284.1 15.3L287.2 18.5M270.8 2.7L272.3 5.6M259.2 6.8L262.0 9.2M474.5 10.3L476.7 12.3M520.4 11.0L521.7 13.5M470.3 12.8L473.1 12.8M472.7 5.4L475.8 5.5M453.6 6.0L457.1 5.9M255.6 13.9L256.3 16.5M476.8 1.1L480.2 1.9M286.1 13.8L288.5 16.5M553.6 3.5L554.8 5.7M275.6 12.0L278.5 12.2M486.3 0.4L487.8 4.4M431.9 4.6L435.5 7.3M509.9 14.2L512.4 17.4M325.6 15.2L327.8 18.7M298.2 10.1L300.6 12.7M430.7 14.7L433.8 14.9M401.5 3.5L403.3 7.1M227.8 14.2L231.2 16.8M397.1 6.4L400.4 6.1M427.6 8.9L430.3 9.5M376.0 13.4L379.7 12.8M348.6 9.6L349.9 11.7M481.1 1.6L483.9 2.4M207.4 14.9L210.0 14.5M318.2 0.0L318.8 3.5M379.7 14.1L381.3 18.1M291.7 4.0L292.7 8.3M391.4 -0.2L394.1 0.4M399.0 7.9L402.4 8.6M461.2 1.3L461.8 4.3M527.4 11.8L528.1 14.9M293.9 1.3L294.6 4.0M550.8 6.6L552.8 8.6M518.5 6.6L522.8 7.7M300.9 14.0L304.4 14.1M370.9 5.1L373.1 7.3M385.2 7.7L388.6 10.5M422.2 7.7L424.4 9.2M232.5 11.8L234.9 15.4M531.3 3.3L535.7 3.4M388.5 0.9L391.7 1.3M360.0 13.3L363.1 14.1M237.1 6.8L240.9 7.9M535.3 8.4L537.7 10.5M479.4 12.9L483.6 12.0M267.1 8.3L268.9 10.9M307.3 15.6L311.4 14.9M441.0 6.6L444.7 5.9M362.1 9.0L364.9 12.5M538.0 8.0L540.7 7.5M312.5 14.9L316.5 16.2M483.8 -0.9L486.4 1.5M420.3 6.8L423.7 8.1M217.7 6.8L218.3 9.5M385.5 7.3L387.5 10.4M409.4 13.9L411.4 15.5M395.0 10.8L396.6 13.5M515.9 9.2L519.8 10.1M423.6 9.4L427.9 9.0M508.7 13.0L511.4 13.6M442.6 12.4L445.0 14.2M274.1 14.7L276.0 18.0M385.6 8.2L388.2 7.7M274.5 3.6L278.6 3.4M297.4 10.2L299.1 13.6M409.0 13.7L410.3 15.9M541.9 6.4L544.5 9.1M242.7 1.9L243.6 5.8M219.5 1.0L223.6 1.9M268.3 9.0L272.1 9.9M553.8 -0.2L555.7 2.5M524.0 13.8L528.1 14.7M258.1 3.9L259.7 7.3M297.7 0.7L299.0 3.6M552.7 2.4L555.3 3.0M467.5 2.0L470.6 4.4M297.6 5.1L298.6 7.7M496.5 11.9L498.9 13.9M331.8 15.1L335.7 14.3M431.9 12.7L433.0 16.1M312.6 14.3L313.7 18.2M553.7 2.1L558.0 1.5M518.6 14.8L522.7 15.6M539.9 0.0L540.7 3.8M445.2 7.2L446.1 9.6M336.9 14.8L339.7 17.1M354.8 4.8L356.1 8.8M547.8 13.4L551.0 14.7M337.2 2.6L338.3 4.9M233.2 -0.3L236.2 2.4M307.5 2.9L310.4 3.8M312.7 1.5L315.9 3.8M496.9 14.3L501.1 13.7M480.3 7.0L484.1 6.2M210.3 6.7L212.5 9.3M266.5 12.6L270.0 13.1M325.1 5.6L327.8 8.7M213.7 8.4L215.2 11.0M465.8 6.8L466.6 10.2M421.4 1.3L422.2 3.8M285.2 6.8L287.0 9.5M235.3 6.9L238.6 8.0M218.5 8.4L220.9 9.3M210.6 4.4L211.8 8.5M452.2 2.5L453.2 5.2M361.6 4.9L363.1 7.9M494.5 6.8L497.7 6.6M364.7 6.6L366.4 9.8M379.7 7.6L380.9 11.2M312.8 2.9L313.8 6.5M212.5 10.3L216.2 11.0M347.5 2.0L349.7 5.7M429.6 6.1L432.5 6.0M530.2 10.0L531.9 12.3M469.8 5.2L474.1 4.5M439.8 3.5L441.0 6.6M279.7 10.4L281.7 13.6M420.1 2.1L422.8 2.1M521.6 8.5L524.6 11.4M298.5 13.6L300.3 17.2M301.7 9.7L303.8 12.6M470.1 11.7L474.2 10.7M433.8 5.8L435.0 10.0M417.9 0.2L419.7 3.8M310.9 11.9L313.3 12.6M511.3 -1.0L513.2 2.4M305.5 1.0L308.3 2.0M341.1 2.6L344.2 4.8M520.8 14.6L523.1 18.4M319.7 3.3L321.2 7.3M400.7 -1.0L402.2 1.3M470.0 7.9L471.0 11.4M250.9 -0.2L252.9 3.5M281.4 5.9L285.6 6.6M267.8 13.2L269.4 15.1M273.8 13.3L276.6 16.5M370.3 11.9L374.2 11.4M555.0 7.9L557.3 9.5M448.2 12.1L450.7 14.1M551.8 4.2L553.4 7.2M474.4 12.1L475.3 16.3M227.3 1.5L229.7 3.9M549.9 1.2L552.2 4.2M491.9 7.7L494.4 6.9M375.3 12.0L377.9 11.5M480.5 10.5L482.8 13.7M241.9 15.0L245.0 14.3M430.0 10.6L431.8 14.6M209.1 4.0L212.3 5.0M528.3 7.5L530.0 9.8M489.4 12.9L493.9 13.2M261.4 2.3L263.9 3.0M218.7 12.7L219.8 17.0M499.1 5.1L500.0 8.8M567.4 8.5L570.7 11.0M261.6 8.5L264.2 9.3M212.2 2.7L213.6 5.9M526.8 1.6L528.0 4.6M277.9 14.2L281.0 14.3M210.8 4.0L213.1 7.2M406.5 -1.5L408.9 2.2M251.4 0.2L255.6 1.1M554.9 13.8L557.7 13.8M408.6 4.4L410.8 8.2M338.0 6.0L340.5 9.4M500.0 15.2L502.4 17.2M318.0 11.6L319.4 14.9M525.0 8.8L526.6 11.5M321.6 9.7L323.8 12.0M254.1 14.4L257.9 13.7M416.3 9.1L419.5 10.3M448.6 13.0L449.4 16.5M217.1 8.3L218.1 10.9M313.1 3.7L315.3 6.3M389.0 6.5L392.2 6.7M347.4 10.8L350.2 13.7M316.6 8.0L317.3 10.4M450.4 3.8L453.7 6.3M490.0 14.2L492.4 16.2M473.9 15.0L477.6 15.7M369.7 7.8L370.2 10.5M529.3 4.6L533.1 3.6M435.9 5.6L437.7 8.4M287.0 4.7L291.3 3.8M387.5 12.6L391.6 11.8M533.2 7.8L534.6 10.5M403.1 13.8L406.7 13.3M275.3 14.4L279.6 13.4M288.4 14.0L292.6 13.3M447.7 10.1L448.3 13.2M514.8 13.6L518.7 12.6M297.8 13.5L301.5 13.1M223.0 14.0L224.9 15.8M218.9 4.5L219.7 7.4M327.2 2.3L328.0 6.2M552.4 16.2L555.9 15.4M222.8 11.1L226.8 11.3M515.5 4.7L516.5 7.7M387.6 7.8L388.7 10.9M414.1 15.0L417.9 16.5M255.4 15.2L257.0 18.2M398.8 6.1L401.9 6.9M353.6 16.0L356.1 15.5M300.3 6.9L302.8 7.7M515.4 0.8L517.9 3.4M491.3 5.6L495.7 6.0M334.6 2.2L337.6 2.5M558.4 7.3L561.2 7.6M277.8 10.0L280.2 12.6M508.7 13.8L512.8 13.5M375.6 15.0L378.7 14.9M297.7 5.7L299.8 7.7M276.3 10.3L279.1 13.5M546.5 14.7L547.9 17.3M246.1 7.2L248.7 7.9M313.2 1.0L314.4 4.3M343.4 4.2L346.6 5.3M324.8 3.4L328.7 4.5M293.2 5.4L295.5 7.9M390.3 5.0L393.0 4.4M430.4 10.9L432.8 11.6M467.4 4.2L468.1 7.6M239.3 14.9L242.2 14.3M284.4 10.4L287.8 10.9M489.9 12.8L490.7 17.0M516.5 8.1L517.6 11.4M277.3 3.8L279.1 7.8M452.6 4.3L454.9 6.9M324.2 2.5L326.2 4.3M488.6 10.0L489.2 12.5M289.4 13.5L292.3 13.2M559.0 1.1L560.9 4.1M408.4 6.3L410.5 10.2M495.5 15.5L498.0 15.4M389.5 5.0L392.7 6.3M255.1 11.5L259.0 11.6M374.2 7.5L376.7 9.8M524.7 0.8L526.6 4.9M362.5 1.6L365.7 1.0M320.7 15.6L321.6 18.1M302.4 12.2L303.0 15.1M504.0 11.0L506.8 11.8M301.6 8.6L303.7 10.3M266.2 8.6L268.3 10.5M429.5 2.2L432.8 2.3M568.6 5.7L569.8 9.4M514.1 12.4L517.3 11.5M334.2 1.8L338.3 1.4M263.8 8.2L266.6 8.6M489.2 12.5L490.2 15.9M285.2 15.5L289.1 16.0M517.2 12.1L520.3 11.5M243.9 2.8L246.5 4.6M215.6 11.6L218.4 14.0M531.0 8.6L534.4 7.7M380.2 2.0L383.8 1.3M456.0 6.7L457.0 10.3M321.5 -0.5L324.5 2.1M355.0 2.6L356.2 6.0M428.1 9.9L431.0 10.1M209.1 6.4L211.9 7.1M305.4 14.2L308.3 13.8M563.7 0.8L566.3 1.1M506.4 11.8L507.7 15.7M215.5 6.7L217.6 9.8M504.8 1.3L508.7 1.4M386.8 0.3L388.0 4.6M392.2 7.9L394.2 9.8M347.6 7.1L349.7 10.6M266.3 10.6L270.4 9.7M261.3 0.8L261.8 3.6M263.3 9.1L265.0 12.1M277.0 8.8L280.5 9.5M282.7 4.3L287.1 4.7M441.2 10.3L442.0 13.3M528.2 12.1L529.9 15.3M366.8 5.0L370.3 7.6M440.5 0.1L444.3 1.3M217.9 13.3L222.2 12.6M342.7 7.0L345.7 9.0M372.6 10.5L374.8 13.7M451.4 4.2L452.5 6.7M280.1 10.9L284.1 11.0M309.8 1.2L310.6 5.3M470.7 3.8L474.5 2.8M212.7 11.9L216.2 12.5M438.3 12.8L439.5 15.3M362.9 3.3L365.4 5.1M212.8 0.8L216.4 1.0M339.4 8.4L342.6 8.8M287.6 3.4L290.2 5.2M457.4 11.9L461.1 11.7M359.4 12.8L360.6 16.2M542.5 11.8L546.2 11.2M385.8 -1.1L388.4 1.2M209.7 0.3L214.0 0.4M265.8 6.9L268.1 9.1M457.0 2.1L460.5 3.6M479.2 4.7L481.4 7.7M371.9 1.5L374.7 2.5M435.4 1.6L439.7 2.0M323.5 13.4L326.6 13.3M368.5 10.2L371.7 10.6M493.0 7.9L495.8 8.7M525.7 14.0L526.3 16.8M292.1 0.9L296.1 2.2M316.0 9.7L318.0 13.3M461.7 11.8L465.0 12.7M309.6 14.4L312.7 13.8M506.6 4.1L509.8 6.7M410.4 6.4L412.5 9.8M485.9 9.2L488.3 9.8M511.0 12.3L513.0 14.5M230.0 15.0L230.6 17.5M427.2 12.3L429.2 14.2M301.7 7.4L303.5 9.6M485.7 -0.3L486.5 3.6M404.9 12.0L408.9 12.6M291.8 0.8L294.6 1.9M546.0 5.7L549.2 6.4M334.6 8.3L336.7 12.1M350.8 9.6L351.7 12.1M255.0 2.8L257.9 2.2M364.8 6.8L366.6 9.5M303.5 12.1L305.5 14.5M373.7 14.3L377.9 13.3M487.5 15.2L491.0 15.0M327.9 2.4L329.9 4.9M277.7 13.8L279.2 15.9M486.6 -0.2L487.8 3.8M419.1 12.9L421.2 16.3M239.7 1.0L242.1 4.0M557.9 2.2L559.8 5.1M249.3 -0.5L249.8 2.2M411.0 -1.3L411.8 2.5M289.2 13.4L292.6 12.9M377.1 4.5L381.4 3.5M207.1 1.5L210.9 3.1M254.5 16.5L257.6 15.7M544.9 12.8L548.5 11.7M394.8 0.8L397.4 1.4M217.8 6.1L220.4 6.6M213.7 12.9L217.4 12.1M479.4 5.8L480.6 8.8M223.1 15.5L224.2 18.1M291.1 6.5L294.8 6.2M363.9 2.9L365.4 6.0M406.4 5.4L409.1 5.1M454.2 -1.9L455.2 2.0M265.9 11.8L269.6 12.9M311.0 14.5L311.7 18.5M442.5 1.3L443.8 5.0M271.8 9.2L273.8 11.1M513.5 11.8L515.2 14.0M382.5 10.6L386.9 10.0M353.9 5.2L357.3 5.5M281.7 12.6L284.9 15.1M212.1 7.7L215.3 10.2M298.2 8.6L300.3 10.1M399.5 14.9L402.1 15.8M343.9 2.9L345.7 6.2M357.5 11.7L359.1 14.4M419.9 1.0L422.3 3.8M456.7 4.4L457.9 8.6M484.2 11.3L487.6 10.8M358.3 -0.4L360.9 0.5M391.6 15.3L393.1 17.6M275.9 6.7L278.6 7.2M524.5 12.6L525.5 16.2M304.0 9.6L308.1 9.9M512.9 -0.9L516.0 2.1M227.5 5.5L231.8 6.0M478.4 9.3L480.8 11.5M544.8 -0.9L545.6 3.5M534.7 8.4L536.6 10.4M413.8 3.7L416.9 6.5M507.7 8.1L508.4 12.4M457.4 10.7L459.9 11.6M519.6 15.3L522.8 14.9M317.7 9.1L320.0 11.9M541.5 7.7L543.8 9.4M424.7 7.4L427.6 9.8M286.2 9.4L289.1 12.1M459.8 0.1L462.4 0.5M281.7 2.8L284.7 5.3M277.8 11.8L279.3 14.1M387.1 5.6L388.7 8.5M468.0 6.2L470.8 9.3M485.5 0.2L486.8 3.2M234.3 1.6L238.2 3.0M448.6 1.3L452.5 1.8M324.5 15.0L325.7 17.2M387.5 2.1L391.5 3.7M255.3 11.9L257.3 13.5M292.4 3.6L294.7 6.0M562.1 4.0L565.1 3.3M344.2 6.4L348.5 6.0M227.3 8.4L229.0 11.3M219.3 5.0L221.8 6.7M492.5 13.2L493.7 17.0M410.6 14.2L411.8 17.4M256.5 5.7L257.7 8.9M390.0 -1.7L390.8 2.5M222.7 10.3L225.4 13.4M430.6 15.2L431.3 18.7M517.0 4.9L518.8 6.7M266.3 6.1L269.9 5.2M485.6 3.4L487.1 6.6M411.6 7.6L412.9 10.8M431.9 2.5L434.5 2.1M504.2 7.6L506.2 9.6M280.0 15.2L281.1 17.9M538.1 7.6L541.6 8.8M425.4 1.9L428.8 1.8M347.6 11.3L348.6 15.1M277.2 1.4L280.4 1.2M540.5 12.4L543.7 13.0M347.3 4.2L350.7 4.9M284.9 9.7L288.3 9.7M507.2 10.3L509.7 13.6M236.8 17.1L241.0 16.3M452.2 16.9L455.2 16.9M516.7 5.2L518.8 7.1M386.9 8.1L388.2 11.1M495.3 4.7L498.1 7.0M391.8 9.1L394.5 9.2M546.2 1.4L548.5 3.9M424.2 14.9L425.9 17.7M405.4 7.8L408.9 9.0M325.0 9.4L326.8 11.5M513.4 12.8L516.0 15.1M264.2 15.7L267.9 17.2M261.8 -0.7L265.9 0.9M564.7 8.3L566.8 10.7M377.0 3.5L378.3 5.6M479.7 7.4L480.7 10.1M310.8 1.2L314.8 1.5M340.8 12.2L341.6 16.0M378.4 11.3L380.6 13.8M463.4 -0.5L465.5 1.2M556.1 14.9L558.2 16.8M404.1 -0.4L407.2 0.8M363.2 0.3L364.1 3.0M388.0 9.1L390.5 11.6M440.9 11.4L443.5 14.4M414.5 8.6L419.0 9.2M471.8 3.8L472.8 6.5M562.6 13.8L564.4 17.8M471.2 6.0L472.6 8.1M410.7 13.1L415.0 12.2M349.8 12.0L353.7 12.0M327.2 12.8L328.2 15.6M334.5 -0.9L335.4 1.6M436.8 0.8L439.3 1.0M239.7 4.8L244.1 5.2M286.0 14.1L287.7 17.2M378.9 13.7L381.1 16.6M374.1 12.3L378.3 12.7M514.7 6.7L517.5 6.6M247.6 5.2L248.3 8.0M293.2 1.4L297.0 1.5M560.1 4.3L562.5 7.6M255.0 -0.3L256.5 2.6M382.9 3.2L385.5 6.8M286.0 16.6L289.2 16.1M482.7 6.5L483.7 9.5M308.5 9.0L311.4 8.8M566.2 6.9L568.1 8.6M487.0 10.7L489.0 13.8M467.2 0.1L468.2 3.6M311.2 7.8L315.0 7.8M545.5 0.5L548.7 0.3M476.2 8.4L478.7 10.9M425.4 9.6L427.1 11.9M468.5 -0.0L470.4 3.6M370.0 3.1L374.2 2.8M374.7 9.9L377.2 12.8M235.1 -1.6L236.9 2.0M460.1 11.2L462.2 12.9M255.7 12.6L258.6 13.1M217.3 5.7L218.9 7.8M567.6 13.2L571.0 13.9M310.5 0.5L314.7 -0.3M425.0 0.7L426.5 4.0M453.3 -1.0L453.8 1.8M562.1 9.3L563.7 12.2M323.2 15.0L325.3 18.2M549.0 2.7L552.8 3.2M303.1 5.1L305.7 7.7M401.4 7.4L402.6 9.9M470.6 10.7L474.8 12.2M523.3 4.4L524.7 8.5M277.7 7.3L280.7 9.6M245.3 5.3L246.7 8.8M431.6 4.3L435.2 5.2M248.3 2.8L251.1 3.8M409.3 3.3L412.0 5.3M225.0 11.6L228.1 11.9M247.0 15.3L248.8 18.0M302.3 9.7L304.8 11.4M408.2 10.5L410.3 12.1M365.0 0.7L368.4 1.7M260.2 14.1L262.9 15.1M353.9 1.9L355.8 5.4M516.2 10.2L520.2 9.9M391.5 7.1L395.6 6.2M438.8 5.5L441.3 6.4M336.5 10.7L338.7 13.3M559.8 7.5L562.7 8.0M489.2 10.5L491.2 12.6M365.0 14.5L368.9 13.5M285.9 16.2L289.6 16.3M354.5 14.1L357.3 16.7M404.6 4.8L406.2 8.0M502.0 5.0L504.8 5.4M249.6 13.7L250.4 16.2M360.8 5.7L362.4 7.9M450.3 9.0L453.2 8.2M498.4 15.5L500.9 17.7M392.6 2.3L394.1 5.9M208.6 13.7L210.6 16.1M339.2 2.9L341.6 5.4M227.4 1.1L230.0 0.9M548.6 12.6L552.7 12.1M408.6 15.3L411.2 17.5M510.7 0.6L512.3 2.7M500.2 3.4L502.7 4.1M517.6 2.4L520.7 3.2M257.4 2.4L260.9 1.8M502.2 10.5L504.7 12.3M558.7 9.0L560.5 10.9M350.1 14.3L351.9 16.2M236.2 6.1L237.1 9.8M447.5 9.8L451.3 10.8M520.8 4.6L524.1 4.2M273.1 10.7L275.8 10.9M339.3 7.2L341.0 10.3M365.7 3.9L366.8 7.3M497.1 2.2L500.1 5.1M494.3 10.0L495.2 12.8M532.9 15.3L535.7 18.2M387.2 1.2L388.5 4.4M533.7 8.0L537.1 7.3M514.4 10.6L517.4 9.9M433.5 -0.0L436.3 0.9M421.0 4.5L425.3 4.5M564.4 16.8L567.9 16.0M258.3 14.1L261.6 15.0M211.8 9.3L215.1 9.9M494.0 5.2L495.1 8.5M273.7 12.8L276.8 13.0M265.5 4.8L267.1 7.5M317.7 11.7L320.0 14.5M285.2 11.5L286.6 14.3M343.5 16.4L347.0 17.1M524.1 4.1L527.1 7.4M426.0 10.3L430.4 9.8M469.9 11.4L473.5 12.4M383.8 9.1L387.5 10.6M518.9 9.5L520.4 13.0M264.5 13.2L267.1 12.7M529.6 4.2L532.4 6.3M533.8 15.8L536.0 17.6M228.5 -1.3L230.8 2.3M449.9 0.6L450.6 3.5M560.9 11.7L562.0 15.1" stroke="#3b405d" stroke-width="1.15" stroke-linecap="round"/><path d="M464.7 -0.4L466.7 1.9M462.3 4.6L463.6 6.8M476.1 1.8L479.8 1.6M455.7 3.7L458.9 2.8M476.7 3.3L477.7 7.1M473.1 1.9L476.0 2.7M471.2 4.1L472.7 8.1M471.4 1.2L473.1 5.1M461.7 3.8L463.0 6.0M474.3 2.4L476.9 4.4M479.2 3.1L481.1 5.7M440.6 6.3L444.7 5.9M448.7 4.9L452.7 6.4M476.6 -0.0L480.8 0.6M461.9 0.7L465.2 0.7M440.6 -0.4L441.7 2.8M447.2 5.9L448.8 9.9M456.4 4.1L458.4 6.1M460.8 4.9L464.2 6.0M461.4 1.9L465.1 1.9M440.5 4.5L443.1 4.0M451.2 6.5L455.2 8.1M443.7 5.8L446.9 8.3M449.3 6.6L450.6 9.1M473.3 -1.6L474.4 2.1M474.0 6.9L478.1 7.6M460.4 5.2L463.0 5.8M454.8 1.2L458.1 1.5" stroke="#9aa0be" stroke-width="1.0" stroke-linecap="round"/><path d="M611 17 C617 12 629 10 644 10.5 C655 11 660 4.5 672 4 C684 3.6 692 10 699 17 Z" fill="#f2c864"/><polygon points="690,0 712,0 722,17 700,17" fill="#5d6486"/><polygon points="712,17 728,4 742,17" fill="#42476a"/><polygon points="739,0 752,0 756,17 744,17" fill="#9098bb"/><polygon points="752,0 777,0 777,17 752,17" fill="#42476a"/><polygon points="777,0 790,0 796,17 781,17" fill="#9aa2c5"/><polygon points="885,0 893,0 901,17 893,17" fill="#666e91"/><polygon points="905,0 913,0 921,17 913,17" fill="#666e91"/><polygon points="925,0 933,0 941,17 933,17" fill="#666e91"/><polygon points="842,0 877,0 903,17 846,17" fill="#f2c864"/><polygon points="945,0 951,0 936,17 930,17" fill="#f2c864"/><polygon points="958,0 969,0 985,17 966,17" fill="#f2c864"/><polygon points="1023,0 1073,0 1078,17 1015,17" fill="#c5cceb"/></g></svg></div>
<div style="position:absolute;left:0.00px;top:414.50px;width:2500.00px;height:76.00px;background:#f9f8f6"></div>
<div class="t sb" style="left:94.30px;top:443.25px;font-size:20.36px;line-height:20.1px;font-weight:400;color:#161513;">33 Results</div>
<div style="position:absolute;left:217.40px;top:427.30px;width:188.10px;height:51.70px;box-sizing:border-box;border:2px solid #7c7c7c;border-radius:7px"></div>
<div class="t sb" style="left:241.40px;top:442.65px;font-size:20.56px;line-height:20.3px;font-weight:400;color:#161513;">Export to Excel</div>
<div style="position:absolute;left:418.60px;top:427.30px;width:209.10px;height:51.70px;box-sizing:border-box;border:2px solid #7c7c7c;border-radius:7px"></div>
<div class="t sb" style="left:442.10px;top:442.65px;font-size:20.56px;line-height:20.3px;font-weight:400;color:#161513;">Update Status</div>
<svg style="position:absolute;left:588px;top:444px;" width="26" height="18" viewBox="0 0 26 18"><path d="M5.5 5.5 H19.8 L12.65 13 Z" fill="#161513"/></svg>
<div style="position:absolute;left:641.00px;top:427.30px;width:215.90px;height:51.70px;box-sizing:border-box;border:2px solid #7c7c7c;border-radius:7px"></div>
<div class="t sb" style="left:664.50px;top:443.30px;font-size:20.26px;line-height:20.0px;font-weight:400;color:#161513;">Manage Issues</div>
<svg style="position:absolute;left:817px;top:444px;" width="26" height="18" viewBox="0 0 26 18"><path d="M5.6 5.5 H19 L12.3 13 Z" fill="#161513"/></svg>
<svg style="position:absolute;left:2280px;top:436px;" width="34" height="34" viewBox="0 0 34 34"><rect x="5.8" y="5.9" width="21.9" height="22.2" fill="none" stroke="#161513" stroke-width="2.2"/><path d="M16.4 6 V28" stroke="#161513" stroke-width="2.2"/></svg>
<div class="t sb" style="left:2322.60px;top:442.40px;font-size:20.46px;line-height:20.2px;font-weight:400;color:#161513;">Columns</div>
<div style="position:absolute;left:70.30px;top:567.00px;width:2359.70px;height:2.00px;background:#e3e3e3"></div>
<svg style="position:absolute;left:83.1px;top:515.7px;" width="28" height="28" viewBox="0 0 28 28"><rect x="2.95" y="2.95" width="21.1" height="21.2" rx="2.6" fill="none" stroke="#161513" stroke-width="1.9"/></svg>
<div class="t sb" style="left:146.50px;top:500.50px;font-size:23.5px;line-height:29px;font-weight:400;color:#161513;">Issue<br>No</div>
<svg style="position:absolute;left:245px;top:516px;" width="16" height="26" viewBox="0 0 16 26"><path d="M1.6 9.7 L7.2 4.8 L12.8 9.7 M1.6 16.2 L7.2 21.2 L12.8 16.2" fill="none" stroke="#161513" stroke-width="1.9"/></svg>
<div class="t sb" style="left:314.30px;top:517.50px;font-size:24.31px;line-height:24.0px;font-weight:400;color:#161513;">Issue Title</div>
<svg style="position:absolute;left:444px;top:516px;" width="16" height="26" viewBox="0 0 16 26"><path d="M1.6 9.7 L7.2 4.8 L12.8 9.7 M1.6 16.2 L7.2 21.2 L12.8 16.2" fill="none" stroke="#161513" stroke-width="1.9"/></svg>
<div class="t sb" style="left:620.20px;top:517.55px;font-size:24.21px;line-height:23.9px;font-weight:400;color:#161513;">Status</div>
<svg style="position:absolute;left:709.7px;top:516px;" width="16" height="26" viewBox="0 0 16 26"><path d="M1.6 9.7 L7.2 4.8 L12.8 9.7 M1.6 16.2 L7.2 21.2 L12.8 16.2" fill="none" stroke="#161513" stroke-width="1.9"/></svg>
<div class="t sb" style="left:779.00px;top:518.40px;font-size:23.5px;line-height:23.2px;font-weight:400;color:#161513;">Response</div>
<svg style="position:absolute;left:903px;top:516px;" width="16" height="26" viewBox="0 0 16 26"><path d="M1.6 9.7 L7.2 4.8 L12.8 9.7 M1.6 16.2 L7.2 21.2 L12.8 16.2" fill="none" stroke="#161513" stroke-width="1.9"/></svg>
<div class="t sb" style="left:973.20px;top:500.00px;font-size:24.51px;line-height:29px;font-weight:400;color:#161513;">Document<br>No</div>
<svg style="position:absolute;left:1129.2px;top:516px;" width="16" height="26" viewBox="0 0 16 26"><path d="M1.6 9.7 L7.2 4.8 L12.8 9.7 M1.6 16.2 L7.2 21.2 L12.8 16.2" fill="none" stroke="#161513" stroke-width="1.9"/></svg>
<div class="t sb" style="left:1198.00px;top:517.65px;font-size:24.01px;line-height:23.7px;font-weight:400;color:#161513;">Revision</div>
<svg style="position:absolute;left:1310.2px;top:516px;" width="16" height="26" viewBox="0 0 16 26"><path d="M1.6 9.7 L7.2 4.8 L12.8 9.7 M1.6 16.2 L7.2 21.2 L12.8 16.2" fill="none" stroke="#161513" stroke-width="1.9"/></svg>
<div class="t sb" style="left:1379.80px;top:516.70px;font-size:24.92px;line-height:24.6px;font-weight:400;color:#161513;">Last Modified by</div>
<svg style="position:absolute;left:1581px;top:516px;" width="16" height="26" viewBox="0 0 16 26"><path d="M1.6 9.7 L7.2 4.8 L12.8 9.7 M1.6 16.2 L7.2 21.2 L12.8 16.2" fill="none" stroke="#161513" stroke-width="1.9"/></svg>
<div class="t sb" style="left:1710.20px;top:499.50px;font-size:24.92px;line-height:29px;font-weight:400;color:#161513;">Last Modified<br>Date</div>
<svg style="position:absolute;left:1894.7px;top:516px;" width="16" height="26" viewBox="0 0 16 26"><path d="M1.6 9.7 L7.2 4.8 L12.8 9.7 M1.6 16.2 L7.2 21.2 L12.8 16.2" fill="none" stroke="#161513" stroke-width="1.9"/></svg>
<div class="t sb" style="left:1964.50px;top:517.45px;font-size:24.41px;line-height:24.1px;font-weight:400;color:#161513;">Discipline</div>
<svg style="position:absolute;left:2088.9px;top:516px;" width="16" height="26" viewBox="0 0 16 26"><path d="M1.6 9.7 L7.2 4.8 L12.8 9.7 M1.6 16.2 L7.2 21.2 L12.8 16.2" fill="none" stroke="#161513" stroke-width="1.9"/></svg>
<div class="t sb" style="left:2158.80px;top:517.30px;font-size:24.72px;line-height:24.4px;font-weight:400;color:#161513;">Location</div>
<svg style="position:absolute;left:2272.8px;top:516px;" width="16" height="26" viewBox="0 0 16 26"><path d="M1.6 9.7 L7.2 4.8 L12.8 9.7 M1.6 16.2 L7.2 21.2 L12.8 16.2" fill="none" stroke="#161513" stroke-width="1.9"/></svg>
<div style="position:absolute;left:0;top:569px;width:2500px;height:915px;overflow:hidden">
<svg style="position:absolute;left:83.1px;top:-8.949999999999932px;" width="28" height="28" viewBox="0 0 28 28"><rect x="2.95" y="2.95" width="21.1" height="21.2" rx="2.6" fill="none" stroke="#161513" stroke-width="1.9"/></svg>
<div class="t" style="left:147.40px;top:-1.50px;font-size:20.97px;line-height:20.7px;font-weight:400;color:#161513;">RI-000023</div>
<div class="t" style="left:315.40px;top:-4.15px;font-size:20.56px;line-height:26px;font-weight:400;color:#155179;">Check A2</div>
<div style="position:absolute;left:622.20px;top:-4.25px;width:83.50px;height:34.70px;background:#f9dcbd;border-radius:17.35px"></div>
<div class="t" style="left:639.20px;top:3.65px;font-size:19.85px;line-height:19.6px;font-weight:400;color:#161513;">Open</div>
<div class="t" style="left:974.00px;top:-3.65px;font-size:19.85px;line-height:26px;font-weight:400;color:#161513;">DRW-EW-EL-<br>00003</div>
<div class="t" style="left:1198.80px;top:-1.30px;font-size:20.56px;line-height:20.3px;font-weight:400;color:#161513;">A</div>
<div class="t" style="left:1380.60px;top:-4.15px;font-size:20.56px;line-height:26px;font-weight:400;color:#161513;">Majestic Builder<br>Gamble)</div>
<div class="t" style="left:1575.00px;top:-1.30px;font-size:20.56px;line-height:20.3px;font-weight:400;color:#161513;">(Euan</div>
<svg style="position:absolute;left:1532px;top:-2.85px;" width="38" height="20" viewBox="0 0 38 20"><g fill="none" stroke="#161513" stroke-width="1.5"><path d="M3.2 0.3 L4 1.9 M0.3 3.4 H6.6 M1.2 6.4 H5.6 M1.2 9.2 H5.6 M1.3 11.7 H5.4 V17.6 H1.3 Z"/><path d="M8.6 1.3 H16.9 M12.4 1.3 L11.6 8.6 M9.2 5 H15.6 V8.6 M8.2 8.6 H17.3 M9.6 11.2 H16 V17.6 H9.6 Z"/><path d="M20.3 4.6 H35 V12.6 H20.3 Z M27.6 0 V18.8"/></g></svg>
<div class="t" style="left:1711.00px;top:-1.30px;font-size:20.56px;line-height:20.3px;font-weight:400;color:#161513;">19 July 2023</div>
<div class="t" style="left:1965.30px;top:-1.30px;font-size:20.56px;line-height:20.3px;font-weight:400;color:#161513;">Electrical</div>
<div class="t" style="left:2159.60px;top:-1.30px;font-size:20.56px;line-height:20.3px;font-weight:400;color:#161513;">East Wing</div>
<svg style="position:absolute;left:2350px;top:-0.5499999999999545px;" width="50" height="20" viewBox="0 0 50 20"><circle cx="12.6" cy="10" r="2.9" fill="#161513"/><circle cx="24.05" cy="10" r="2.9" fill="#161513"/><circle cx="35.5" cy="10" r="2.9" fill="#161513"/></svg>
<div style="position:absolute;left:70.30px;top:66.50px;width:2359.70px;height:2.00px;background:#e4e4e4"></div>
<svg style="position:absolute;left:83.1px;top:81.60000000000002px;" width="28" height="28" viewBox="0 0 28 28"><rect x="2.95" y="2.95" width="21.1" height="21.2" rx="2.6" fill="none" stroke="#161513" stroke-width="1.9"/></svg>
<div class="t" style="left:147.40px;top:89.05px;font-size:20.97px;line-height:20.7px;font-weight:400;color:#161513;">RI-000021</div>
<div class="t" style="left:315.40px;top:86.40px;font-size:20.56px;line-height:26px;font-weight:400;color:#155179;">Non-Compliant Stair Tread<br>Dimensions</div>
<div style="position:absolute;left:622.20px;top:86.30px;width:83.50px;height:34.70px;background:#f9dcbd;border-radius:17.35px"></div>
<div class="t" style="left:639.20px;top:94.20px;font-size:19.85px;line-height:19.6px;font-weight:400;color:#161513;">Open</div>
<div class="t" style="left:974.00px;top:86.90px;font-size:19.85px;line-height:26px;font-weight:400;color:#161513;">DRW-NW-EL-<br>00004</div>
<div class="t" style="left:1198.80px;top:89.25px;font-size:20.56px;line-height:20.3px;font-weight:400;color:#161513;">A</div>
<div class="t" style="left:1380.60px;top:86.40px;font-size:20.56px;line-height:26px;font-weight:400;color:#161513;">Aconex Admin (Chris<br>Cunnington)</div>
<div class="t" style="left:1711.00px;top:89.25px;font-size:20.56px;line-height:20.3px;font-weight:400;color:#161513;">23 May 2023</div>
<div class="t" style="left:1965.30px;top:89.25px;font-size:20.56px;line-height:20.3px;font-weight:400;color:#161513;">Electrical</div>
<div class="t" style="left:2159.60px;top:89.25px;font-size:20.56px;line-height:20.3px;font-weight:400;color:#161513;">North Wing</div>
<svg style="position:absolute;left:2350px;top:90.0px;" width="50" height="20" viewBox="0 0 50 20"><circle cx="12.6" cy="10" r="2.9" fill="#161513"/><circle cx="24.05" cy="10" r="2.9" fill="#161513"/><circle cx="35.5" cy="10" r="2.9" fill="#161513"/></svg>
<div style="position:absolute;left:70.30px;top:155.70px;width:2359.70px;height:2.00px;background:#e4e4e4"></div>
<svg style="position:absolute;left:83.1px;top:170.80000000000007px;" width="28" height="28" viewBox="0 0 28 28"><rect x="2.95" y="2.95" width="21.1" height="21.2" rx="2.6" fill="none" stroke="#161513" stroke-width="1.9"/></svg>
<div class="t" style="left:147.40px;top:178.25px;font-size:20.97px;line-height:20.7px;font-weight:400;color:#161513;">RI-000020</div>
<div class="t" style="left:315.40px;top:175.60px;font-size:20.56px;line-height:26px;font-weight:400;color:#155179;">Missing Guardrails for<br>Elevated Areas</div>
<div style="position:absolute;left:622.20px;top:175.50px;width:83.50px;height:34.70px;background:#f9dcbd;border-radius:17.35px"></div>
<div class="t" style="left:639.20px;top:183.40px;font-size:19.85px;line-height:19.6px;font-weight:400;color:#161513;">Open</div>
<div class="t" style="left:974.00px;top:176.10px;font-size:19.85px;line-height:26px;font-weight:400;color:#161513;">DRW-NW-EL-<br>00004</div>
<div class="t" style="left:1198.80px;top:178.45px;font-size:20.56px;line-height:20.3px;font-weight:400;color:#161513;">A</div>
<div class="t" style="left:1380.60px;top:175.60px;font-size:20.56px;line-height:26px;font-weight:400;color:#161513;">Aconex Admin (Chris<br>Cunnington)</div>
<div class="t" style="left:1711.00px;top:178.45px;font-size:20.56px;line-height:20.3px;font-weight:400;color:#161513;">23 May 2023</div>
<div class="t" style="left:1965.30px;top:178.45px;font-size:20.56px;line-height:20.3px;font-weight:400;color:#161513;">Electrical</div>
<div class="t" style="left:2159.60px;top:178.45px;font-size:20.56px;line-height:20.3px;font-weight:400;color:#161513;">North Wing</div>
<svg style="position:absolute;left:2350px;top:179.20000000000005px;" width="50" height="20" viewBox="0 0 50 20"><circle cx="12.6" cy="10" r="2.9" fill="#161513"/><circle cx="24.05" cy="10" r="2.9" fill="#161513"/><circle cx="35.5" cy="10" r="2.9" fill="#161513"/></svg>
<div style="position:absolute;left:70.30px;top:244.90px;width:2359.70px;height:2.00px;background:#e4e4e4"></div>
<svg style="position:absolute;left:83.1px;top:260.0px;" width="28" height="28" viewBox="0 0 28 28"><rect x="2.95" y="2.95" width="21.1" height="21.2" rx="2.6" fill="none" stroke="#161513" stroke-width="1.9"/></svg>
<div class="t" style="left:147.40px;top:267.45px;font-size:20.97px;line-height:20.7px;font-weight:400;color:#161513;">RI-000019</div>
<div class="t" style="left:315.40px;top:264.80px;font-size:20.56px;line-height:26px;font-weight:400;color:#155179;">Insufficient Landing Space</div>
<div style="position:absolute;left:622.20px;top:264.70px;width:83.50px;height:34.70px;background:#f9dcbd;border-radius:17.35px"></div>
<div class="t" style="left:639.20px;top:272.60px;font-size:19.85px;line-height:19.6px;font-weight:400;color:#161513;">Open</div>
<div class="t" style="left:974.00px;top:265.30px;font-size:19.85px;line-height:26px;font-weight:400;color:#161513;">DRW-NW-EL-<br>00004</div>
<div class="t" style="left:1198.80px;top:267.65px;font-size:20.56px;line-height:20.3px;font-weight:400;color:#161513;">A</div>
<div class="t" style="left:1380.60px;top:264.80px;font-size:20.56px;line-height:26px;font-weight:400;color:#161513;">Aconex Admin (Chris<br>Cunnington)</div>
<div class="t" style="left:1711.00px;top:267.65px;font-size:20.56px;line-height:20.3px;font-weight:400;color:#161513;">23 May 2023</div>
<div class="t" style="left:1965.30px;top:267.65px;font-size:20.56px;line-height:20.3px;font-weight:400;color:#161513;">Electrical</div>
<div class="t" style="left:2159.60px;top:267.65px;font-size:20.56px;line-height:20.3px;font-weight:400;color:#161513;">North Wing</div>
<svg style="position:absolute;left:2350px;top:268.4px;" width="50" height="20" viewBox="0 0 50 20"><circle cx="12.6" cy="10" r="2.9" fill="#161513"/><circle cx="24.05" cy="10" r="2.9" fill="#161513"/><circle cx="35.5" cy="10" r="2.9" fill="#161513"/></svg>
<div style="position:absolute;left:70.30px;top:334.10px;width:2359.70px;height:2.00px;background:#e4e4e4"></div>
<svg style="position:absolute;left:83.1px;top:349.20000000000005px;" width="28" height="28" viewBox="0 0 28 28"><rect x="2.95" y="2.95" width="21.1" height="21.2" rx="2.6" fill="none" stroke="#161513" stroke-width="1.9"/></svg>
<div class="t" style="left:147.40px;top:356.65px;font-size:20.97px;line-height:20.7px;font-weight:400;color:#161513;">RI-000018</div>
<div class="t" style="left:315.40px;top:354.00px;font-size:20.56px;line-height:26px;font-weight:400;color:#155179;">Inadequate Handrail Height</div>
<div style="position:absolute;left:622.20px;top:353.90px;width:83.50px;height:34.70px;background:#f9dcbd;border-radius:17.35px"></div>
<div class="t" style="left:639.20px;top:361.80px;font-size:19.85px;line-height:19.6px;font-weight:400;color:#161513;">Open</div>
<div class="t" style="left:974.00px;top:354.50px;font-size:19.85px;line-height:26px;font-weight:400;color:#161513;">DRW-NW-EL-<br>00004</div>
<div class="t" style="left:1198.80px;top:356.85px;font-size:20.56px;line-height:20.3px;font-weight:400;color:#161513;">A</div>
<div class="t" style="left:1380.60px;top:354.00px;font-size:20.56px;line-height:26px;font-weight:400;color:#161513;">Aconex Admin (Chris<br>Cunnington)</div>
<div class="t" style="left:1711.00px;top:356.85px;font-size:20.56px;line-height:20.3px;font-weight:400;color:#161513;">23 May 2023</div>
<div class="t" style="left:1965.30px;top:356.85px;font-size:20.56px;line-height:20.3px;font-weight:400;color:#161513;">Electrical</div>
<div class="t" style="left:2159.60px;top:356.85px;font-size:20.56px;line-height:20.3px;font-weight:400;color:#161513;">North Wing</div>
<svg style="position:absolute;left:2350px;top:357.6px;" width="50" height="20" viewBox="0 0 50 20"><circle cx="12.6" cy="10" r="2.9" fill="#161513"/><circle cx="24.05" cy="10" r="2.9" fill="#161513"/><circle cx="35.5" cy="10" r="2.9" fill="#161513"/></svg>
<div style="position:absolute;left:70.30px;top:423.30px;width:2359.70px;height:2.00px;background:#e4e4e4"></div>
<svg style="position:absolute;left:83.1px;top:438.4px;" width="28" height="28" viewBox="0 0 28 28"><rect x="2.95" y="2.95" width="21.1" height="21.2" rx="2.6" fill="none" stroke="#161513" stroke-width="1.9"/></svg>
<div class="t" style="left:147.40px;top:445.85px;font-size:20.97px;line-height:20.7px;font-weight:400;color:#161513;">RI-000017</div>
<div class="t" style="left:315.40px;top:443.20px;font-size:20.56px;line-height:26px;font-weight:400;color:#155179;">Gross income too high</div>
<div style="position:absolute;left:622.20px;top:443.10px;width:83.50px;height:34.70px;background:#f9dcbd;border-radius:17.35px"></div>
<div class="t" style="left:639.20px;top:451.00px;font-size:19.85px;line-height:19.6px;font-weight:400;color:#161513;">Open</div>
<div class="t" style="left:974.00px;top:443.70px;font-size:19.85px;line-height:26px;font-weight:400;color:#161513;">MAN-SW-EL-<br>00002</div>
<div class="t" style="left:1198.80px;top:446.05px;font-size:20.56px;line-height:20.3px;font-weight:400;color:#161513;">A</div>
<div class="t" style="left:1380.60px;top:443.20px;font-size:20.56px;line-height:26px;font-weight:400;color:#161513;">Aconex Admin (Chris<br>Cunnington)</div>
<div class="t" style="left:1711.00px;top:446.05px;font-size:20.56px;line-height:20.3px;font-weight:400;color:#161513;">18 May 2023</div>
<div class="t" style="left:1965.30px;top:446.05px;font-size:20.56px;line-height:20.3px;font-weight:400;color:#161513;">Electrical</div>
<div class="t" style="left:2159.60px;top:446.05px;font-size:20.56px;line-height:20.3px;font-weight:400;color:#161513;">South Wing</div>
<svg style="position:absolute;left:2350px;top:446.79999999999995px;" width="50" height="20" viewBox="0 0 50 20"><circle cx="12.6" cy="10" r="2.9" fill="#161513"/><circle cx="24.05" cy="10" r="2.9" fill="#161513"/><circle cx="35.5" cy="10" r="2.9" fill="#161513"/></svg>
<div style="position:absolute;left:70.30px;top:512.50px;width:2359.70px;height:2.00px;background:#e4e4e4"></div>
<svg style="position:absolute;left:83.1px;top:527.5999999999999px;" width="28" height="28" viewBox="0 0 28 28"><rect x="2.95" y="2.95" width="21.1" height="21.2" rx="2.6" fill="none" stroke="#161513" stroke-width="1.9"/></svg>
<div class="t" style="left:147.40px;top:535.05px;font-size:20.97px;line-height:20.7px;font-weight:400;color:#161513;">RI-000012</div>
<div class="t" style="left:315.40px;top:532.40px;font-size:20.56px;line-height:26px;font-weight:400;color:#155179;">Wrong calculations</div>
<div style="position:absolute;left:622.20px;top:532.30px;width:83.50px;height:34.70px;background:#f9dcbd;border-radius:17.35px"></div>
<div class="t" style="left:639.20px;top:540.20px;font-size:19.85px;line-height:19.6px;font-weight:400;color:#161513;">Open</div>
<div class="t" style="left:974.00px;top:532.90px;font-size:19.85px;line-height:26px;font-weight:400;color:#161513;">DRW-NW-EL-<br>00004</div>
<div class="t" style="left:1198.80px;top:535.25px;font-size:20.56px;line-height:20.3px;font-weight:400;color:#161513;">A</div>
<div class="t" style="left:1380.60px;top:532.40px;font-size:20.56px;line-height:26px;font-weight:400;color:#161513;">Aconex Admin (Patrick oleary)</div>
<div class="t" style="left:1711.00px;top:535.25px;font-size:20.56px;line-height:20.3px;font-weight:400;color:#161513;">17 Apr 2023</div>
<div class="t" style="left:1965.30px;top:535.25px;font-size:20.56px;line-height:20.3px;font-weight:400;color:#161513;">Electrical</div>
<div class="t" style="left:2159.60px;top:535.25px;font-size:20.56px;line-height:20.3px;font-weight:400;color:#161513;">North Wing</div>
<svg style="position:absolute;left:2350px;top:536.0px;" width="50" height="20" viewBox="0 0 50 20"><circle cx="12.6" cy="10" r="2.9" fill="#161513"/><circle cx="24.05" cy="10" r="2.9" fill="#161513"/><circle cx="35.5" cy="10" r="2.9" fill="#161513"/></svg>
<div style="position:absolute;left:70.30px;top:601.70px;width:2359.70px;height:2.00px;background:#e4e4e4"></div>
<svg style="position:absolute;left:83.1px;top:616.8px;" width="28" height="28" viewBox="0 0 28 28"><rect x="2.95" y="2.95" width="21.1" height="21.2" rx="2.6" fill="none" stroke="#161513" stroke-width="1.9"/></svg>
<div class="t" style="left:147.40px;top:624.25px;font-size:20.97px;line-height:20.7px;font-weight:400;color:#161513;">RI-000011</div>
<div class="t" style="left:315.40px;top:621.60px;font-size:20.56px;line-height:26px;font-weight:400;color:#155179;">Change to pink</div>
<div style="position:absolute;left:622.20px;top:621.50px;width:83.50px;height:34.70px;background:#f9dcbd;border-radius:17.35px"></div>
<div class="t" style="left:639.20px;top:629.40px;font-size:19.85px;line-height:19.6px;font-weight:400;color:#161513;">Open</div>
<div class="t" style="left:779.80px;top:624.45px;font-size:20.56px;line-height:20.3px;font-weight:400;color:#161513;">Pending</div>
<div class="t" style="left:974.00px;top:622.10px;font-size:19.85px;line-height:26px;font-weight:400;color:#161513;">DRW-EW-EL-<br>00006</div>
<div class="t" style="left:1198.80px;top:624.45px;font-size:20.56px;line-height:20.3px;font-weight:400;color:#161513;">A</div>
<div class="t" style="left:1380.60px;top:621.60px;font-size:20.56px;line-height:26px;font-weight:400;color:#161513;">Lowton WB Consulting<br>(Ashton Murray)</div>
<div class="t" style="left:1711.00px;top:624.45px;font-size:20.56px;line-height:20.3px;font-weight:400;color:#161513;">8 May 2025</div>
<div class="t" style="left:1965.30px;top:624.45px;font-size:20.56px;line-height:20.3px;font-weight:400;color:#161513;">Electrical</div>
<div class="t" style="left:2159.60px;top:624.45px;font-size:20.56px;line-height:20.3px;font-weight:400;color:#161513;">East Wing</div>
<svg style="position:absolute;left:2350px;top:625.2px;" width="50" height="20" viewBox="0 0 50 20"><circle cx="12.6" cy="10" r="2.9" fill="#161513"/><circle cx="24.05" cy="10" r="2.9" fill="#161513"/><circle cx="35.5" cy="10" r="2.9" fill="#161513"/></svg>
<div style="position:absolute;left:70.30px;top:690.90px;width:2359.70px;height:2.00px;background:#e4e4e4"></div>
<svg style="position:absolute;left:83.1px;top:706.0px;" width="28" height="28" viewBox="0 0 28 28"><rect x="2.95" y="2.95" width="21.1" height="21.2" rx="2.6" fill="none" stroke="#161513" stroke-width="1.9"/></svg>
<div class="t" style="left:147.40px;top:713.45px;font-size:20.97px;line-height:20.7px;font-weight:400;color:#161513;">RI-000010</div>
<div class="t" style="left:315.40px;top:710.80px;font-size:20.56px;line-height:26px;font-weight:400;color:#155179;">Add clearance between<br>pipes and wall</div>
<div style="position:absolute;left:622.20px;top:710.70px;width:83.50px;height:34.70px;background:#f9dcbd;border-radius:17.35px"></div>
<div class="t" style="left:639.20px;top:718.60px;font-size:19.85px;line-height:19.6px;font-weight:400;color:#161513;">Open</div>
<div class="t" style="left:779.80px;top:713.65px;font-size:20.56px;line-height:20.3px;font-weight:400;color:#161513;">Not Accepted</div>
<div class="t" style="left:974.00px;top:711.30px;font-size:19.85px;line-height:26px;font-weight:400;color:#161513;">DRW-SW-EL-<br>00001</div>
<div class="t" style="left:1198.80px;top:713.65px;font-size:20.56px;line-height:20.3px;font-weight:400;color:#161513;">A</div>
<div class="t" style="left:1380.60px;top:710.80px;font-size:20.56px;line-height:26px;font-weight:400;color:#161513;">Aconex Admin (Patrick oleary)</div>
<div class="t" style="left:1711.00px;top:713.65px;font-size:20.56px;line-height:20.3px;font-weight:400;color:#161513;">1 Dec 2022</div>
<div class="t" style="left:1965.30px;top:713.65px;font-size:20.56px;line-height:20.3px;font-weight:400;color:#161513;">Electrical</div>
<div class="t" style="left:2159.60px;top:713.65px;font-size:20.56px;line-height:20.3px;font-weight:400;color:#161513;">South Wing</div>
<svg style="position:absolute;left:2350px;top:714.4000000000001px;" width="50" height="20" viewBox="0 0 50 20"><circle cx="12.6" cy="10" r="2.9" fill="#161513"/><circle cx="24.05" cy="10" r="2.9" fill="#161513"/><circle cx="35.5" cy="10" r="2.9" fill="#161513"/></svg>
<div style="position:absolute;left:70.30px;top:780.10px;width:2359.70px;height:2.00px;background:#e4e4e4"></div>
<svg style="position:absolute;left:83.1px;top:795.1999999999998px;" width="28" height="28" viewBox="0 0 28 28"><rect x="2.95" y="2.95" width="21.1" height="21.2" rx="2.6" fill="none" stroke="#161513" stroke-width="1.9"/></svg>
<div class="t" style="left:147.40px;top:802.65px;font-size:20.97px;line-height:20.7px;font-weight:400;color:#161513;">RI-000008</div>
<div class="t" style="left:315.40px;top:800.00px;font-size:20.56px;line-height:26px;font-weight:400;color:#155179;">Incorrect dimensions</div>
<div style="position:absolute;left:622.20px;top:799.90px;width:83.50px;height:34.70px;background:#f9dcbd;border-radius:17.35px"></div>
<div class="t" style="left:639.20px;top:807.80px;font-size:19.85px;line-height:19.6px;font-weight:400;color:#161513;">Open</div>
<div class="t" style="left:974.00px;top:800.50px;font-size:19.85px;line-height:26px;font-weight:400;color:#161513;">MAN-SW-EL-<br>00002</div>
<div class="t" style="left:1198.80px;top:802.85px;font-size:20.56px;line-height:20.3px;font-weight:400;color:#161513;">A</div>
<div class="t" style="left:1380.60px;top:800.00px;font-size:20.56px;line-height:26px;font-weight:400;color:#161513;">Aconex Admin (Patrick oleary)</div>
<div class="t" style="left:1711.00px;top:802.85px;font-size:20.56px;line-height:20.3px;font-weight:400;color:#161513;">5 Sept 2022</div>
<div class="t" style="left:1965.30px;top:802.85px;font-size:20.56px;line-height:20.3px;font-weight:400;color:#161513;">Electrical</div>
<div class="t" style="left:2159.60px;top:802.85px;font-size:20.56px;line-height:20.3px;font-weight:400;color:#161513;">South Wing</div>
<svg style="position:absolute;left:2350px;top:803.5999999999999px;" width="50" height="20" viewBox="0 0 50 20"><circle cx="12.6" cy="10" r="2.9" fill="#161513"/><circle cx="24.05" cy="10" r="2.9" fill="#161513"/><circle cx="35.5" cy="10" r="2.9" fill="#161513"/></svg>
<div style="position:absolute;left:70.30px;top:869.30px;width:2359.70px;height:2.00px;background:#e4e4e4"></div>
<svg style="position:absolute;left:83.1px;top:884.4000000000001px;" width="28" height="28" viewBox="0 0 28 28"><rect x="2.95" y="2.95" width="21.1" height="21.2" rx="2.6" fill="none" stroke="#161513" stroke-width="1.9"/></svg>
<div class="t" style="left:147.40px;top:891.85px;font-size:20.97px;line-height:20.7px;font-weight:400;color:#161513;">RI-000007</div>
<div class="t" style="left:315.40px;top:889.20px;font-size:20.56px;line-height:26px;font-weight:400;color:#155179;">Incomplete information</div>
<div style="position:absolute;left:622.20px;top:889.10px;width:83.50px;height:34.70px;background:#f9dcbd;border-radius:17.35px"></div>
<div class="t" style="left:639.20px;top:897.00px;font-size:19.85px;line-height:19.6px;font-weight:400;color:#161513;">Open</div>
<div class="t" style="left:974.00px;top:889.70px;font-size:19.85px;line-height:26px;font-weight:400;color:#161513;">MAN-SW-EL-<br>00002</div>
<div class="t" style="left:1198.80px;top:892.05px;font-size:20.56px;line-height:20.3px;font-weight:400;color:#161513;">A</div>
<div class="t" style="left:1380.60px;top:889.20px;font-size:20.56px;line-height:26px;font-weight:400;color:#161513;">Aconex Admin (Patrick oleary)</div>
<div class="t" style="left:1711.00px;top:892.05px;font-size:20.56px;line-height:20.3px;font-weight:400;color:#161513;">31 Aug 2022</div>
<div class="t" style="left:1965.30px;top:892.05px;font-size:20.56px;line-height:20.3px;font-weight:400;color:#161513;">Electrical</div>
<div class="t" style="left:2159.60px;top:892.05px;font-size:20.56px;line-height:20.3px;font-weight:400;color:#161513;">South Wing</div>
<svg style="position:absolute;left:2350px;top:892.8000000000002px;" width="50" height="20" viewBox="0 0 50 20"><circle cx="12.6" cy="10" r="2.9" fill="#161513"/><circle cx="24.05" cy="10" r="2.9" fill="#161513"/><circle cx="35.5" cy="10" r="2.9" fill="#161513"/></svg>
</div>
<div class="t" style="left:76.80px;top:1513.25px;font-size:22.39px;line-height:22.1px;font-weight:400;color:#161513;">Page</div>
<div class="t" style="left:175.80px;top:1516.15px;font-size:22.39px;line-height:22.1px;font-weight:400;color:#161513;">1</div>
<div class="t" style="left:217.60px;top:1513.25px;font-size:22.39px;line-height:22.1px;font-weight:400;color:#161513;letter-spacing:0.9px;word-spacing:3px">of 1</div>
<div class="t" style="left:289.80px;top:1513.25px;font-size:22.39px;line-height:22.1px;font-weight:400;color:#161513;letter-spacing:1.1px">(1-33 of 33 items)</div>
<div style="position:absolute;left:505.50px;top:1492.00px;width:1.00px;height:63.60px;background:#dadada"></div>
<svg style="position:absolute;left:530px;top:1510px;" width="30" height="32" viewBox="0 0 30 32"><path d="M8.8 6 V26.5" stroke="#9a9a9a" stroke-width="3"/><path d="M24 7.2 L15 16.3 L24 25.4" fill="none" stroke="#9a9a9a" stroke-width="2.8"/></svg>
<svg style="position:absolute;left:600px;top:1510px;" width="20" height="32" viewBox="0 0 20 32"><path d="M14.8 8.3 L6.3 16.3 L14.8 24.2 Z" fill="#9a9a9a"/></svg>
<div style="position:absolute;left:643.20px;top:1503.20px;width:39.60px;height:44.40px;box-sizing:border-box;border:1.6px solid #161513"></div>
<div class="t" style="left:655.30px;top:1515.65px;font-size:22.39px;line-height:22.1px;font-weight:400;color:#161513;">1</div>
<svg style="position:absolute;left:705px;top:1510px;" width="20" height="32" viewBox="0 0 20 32"><path d="M5.9 8.3 L14.4 16.3 L5.9 24.2 Z" fill="#9a9a9a"/></svg>
<svg style="position:absolute;left:765px;top:1510px;" width="30" height="32" viewBox="0 0 30 32"><path d="M21.8 6 V26.5" stroke="#9a9a9a" stroke-width="3"/><path d="M6.7 7.2 L15.7 16.3 L6.7 25.4" fill="none" stroke="#9a9a9a" stroke-width="2.8"/></svg>
</body></html>
